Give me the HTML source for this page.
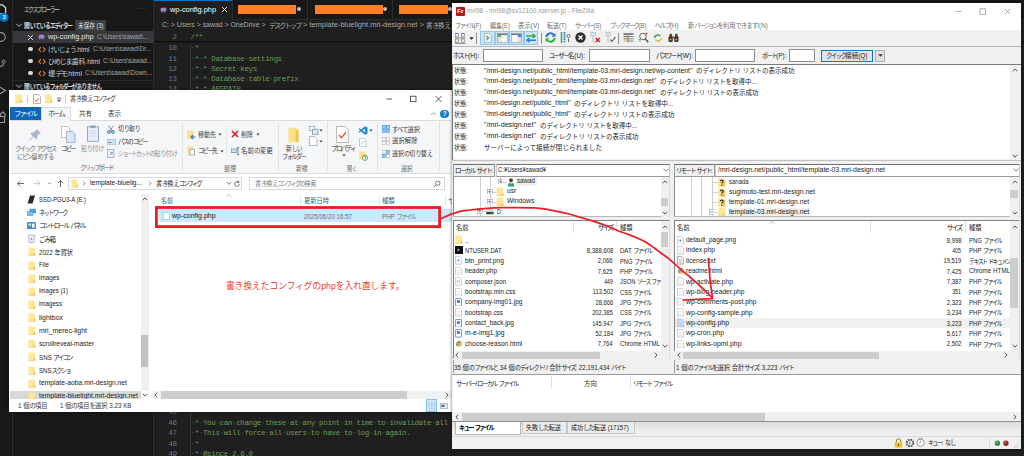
<!DOCTYPE html>
<html lang="ja">
<head>
<meta charset="utf-8">
<title>wp-config upload</title>
<style>
*{box-sizing:border-box;margin:0;padding:0}
html,body{width:1024px;height:456px;overflow:hidden;background:#1f1f1f}
body{position:relative;font-family:"Liberation Sans","Noto Sans CJK JP",sans-serif;font-size:6.6px;color:#222}
.a{position:absolute}
.t{position:absolute;white-space:nowrap;line-height:1}
.k{letter-spacing:-.25em}
.h{letter-spacing:-.13em}
.w{color:#4d5f45}
.code{font-family:"Liberation Mono","Noto Sans CJK JP",monospace;letter-spacing:-.36px;color:#6a9955}
.ln{font-family:"Liberation Mono","Noto Sans CJK JP",monospace;letter-spacing:-.36px;color:#6e7681}
</style>
</head>
<body>
<div class="a" style="left:0px;top:0px;width:1024px;height:456px;background:#1f1f1f;"></div>
<div class="a" style="left:0px;top:0px;width:13px;height:456px;background:#181818;border-right:1px solid #2b2b2b;"></div>
<div class="a" style="left:13px;top:0px;width:140.5px;height:456px;background:#181818;border-right:1px solid #2b2b2b;"></div>
<div class="a" style="left:153.5px;top:0px;width:871px;height:20px;background:#181818;border-bottom:1px solid #2b2b2b;"></div>
<div class="a" style="left:153.5px;top:0px;width:79px;height:20px;background:#1f1f1f;border-top:1px solid #0078d4;border-right:1px solid #2b2b2b;"></div>
<svg class="a" style="left:0;top:0" width="13" height="140" viewBox="0 0 13 140">
<path d="M-2 4.800h4.600l3 3v6h-7.600z" fill="none" stroke="#e0e0e0" stroke-width="1.200"/>
<circle cx="4" cy="17.300" r="4.500" fill="#0078d4"/>
<circle cx="0.800" cy="37" r="4.400" fill="none" stroke="#9a9a9a" stroke-width="1.100"/>
<path d="M-1 66.500c3 0 4.500-1 4.500-3.300" fill="none" stroke="#9a9a9a" stroke-width="1.100"/><circle cx="3.600" cy="61.600" r="1.500" fill="none" stroke="#9a9a9a" stroke-width="1"/>
<path d="M-1 86.500l6.500 4-6.500 4" fill="none" stroke="#9a9a9a" stroke-width="1.100"/>
<path d="M-1 116.500h5.500v6h-7M0.500 116.500v-2.500l2.300-2 2.300 2v2.500" fill="none" stroke="#9a9a9a" stroke-width="1.100"/>
</svg>
<div class="t" style="top:15.00px;font-size:5.2px;color:#fff;font-weight:bold;left:2.70px;">3</div>
<div class="t" style="top:6.00px;font-size:7.2px;color:#ccc;left:24.00px;transform:scaleX(0.804);transform-origin:left center;"><span class="k">エクスプローラー</span></div>
<div class="t" style="top:5.00px;font-size:8px;color:#ccc;left:137.50px;transform:scaleX(0.936);transform-origin:left center;"><span class="w">·</span><span class="w">·</span><span class="w">·</span></div>
<svg class="a" style="left:15px;top:21.2px" width="8" height="8" viewBox="0 0 8 8"><path d="M1.300 2.800l2.700 2.700 2.700-2.700" fill="none" stroke="#ccc" stroke-width=".9"/></svg>
<div class="t" style="top:22.00px;font-size:7.2px;color:#d4d4d4;font-weight:bold;left:24.00px;transform:scaleX(0.813);transform-origin:left center;">開<span class="h">いている</span><span class="k">エディター</span></div>
<div class="a" style="left:74.5px;top:20px;width:31px;height:10.5px;background:#3e3e3e;border-radius:1px;"></div>
<div class="t" style="top:22.00px;font-size:7.2px;color:#e0e0e0;left:77.50px;transform:scaleX(0.788);transform-origin:left center;">未保存 (3)</div>
<div class="a" style="left:13px;top:31px;width:140.5px;height:12px;background:#37373d;"></div>
<svg class="a" style="left:27px;top:33.7px" width="7" height="7" viewBox="0 0 7 7"><path d="M1 1l5 5M6 1l-5 5" stroke="#ddd" stroke-width=".95"/></svg>
<svg class="a" style="left:38px;top:34.4px" width="7" height="6.100" viewBox="0 0 8 7"><ellipse cx="4" cy="2.800" rx="3.500" ry="2.300" fill="#a57ccf"/><rect x="1.300" y="3.500" width="1.400" height="2.700" fill="#a57ccf"/><rect x="4.700" y="3.500" width="1.400" height="2.700" fill="#a57ccf"/></svg>
<div class="t" style="top:33.00px;font-size:7.2px;color:#e6e6e6;left:48.00px;transform:scaleX(1.017);transform-origin:left center;">wp-config.php</div>
<div class="t" style="top:34.00px;font-size:6.4px;color:#a6a6a6;left:97.00px;transform:scaleX(0.986);transform-origin:left center;">C:\Users\sawad\...</div>
<div class="a" style="left:28.300px;top:47.1px;width:4.400px;height:4.400px;border-radius:50%;background:#d8d8d8"></div>
<svg class="a" style="left:37.500px;top:45.8px" width="8" height="7" viewBox="0 0 8 7"><path d="M3 1.200l-2.200 2.300 2.200 2.300M5 1.200l2.200 2.300-2.200 2.300" fill="none" stroke="#e37933" stroke-width="1.100"/></svg>
<div class="t" style="top:46.00px;font-size:7.2px;color:#d0d0d0;left:48.00px;transform:scaleX(0.886);transform-origin:left center;"><span class="h">けいじょう</span>.html</div>
<div class="t" style="top:46.00px;font-size:6.4px;color:#a6a6a6;left:92.50px;transform:scaleX(0.990);transform-origin:left center;">C:\Users\sawad\Dr...</div>
<div class="a" style="left:28.300px;top:59.1px;width:4.400px;height:4.400px;border-radius:50%;background:#d8d8d8"></div>
<svg class="a" style="left:37.500px;top:57.8px" width="8" height="7" viewBox="0 0 8 7"><path d="M3 1.200l-2.200 2.300 2.200 2.300M5 1.200l2.200 2.300-2.200 2.300" fill="none" stroke="#e37933" stroke-width="1.100"/></svg>
<div class="t" style="top:58.00px;font-size:7.2px;color:#d0d0d0;left:48.00px;transform:scaleX(0.946);transform-origin:left center;"><span class="h">ひめじま</span>歯科.html</div>
<div class="t" style="top:58.00px;font-size:6.4px;color:#a6a6a6;left:103.00px;transform:scaleX(0.971);transform-origin:left center;">C:\Users\sawad...</div>
<div class="a" style="left:28.300px;top:71.1px;width:4.400px;height:4.400px;border-radius:50%;background:#d8d8d8"></div>
<svg class="a" style="left:37.500px;top:69.8px" width="8" height="7" viewBox="0 0 8 7"><path d="M3 1.200l-2.200 2.300 2.200 2.300M5 1.200l2.200 2.300-2.200 2.300" fill="none" stroke="#e37933" stroke-width="1.100"/></svg>
<div class="t" style="top:70.00px;font-size:7.2px;color:#d0d0d0;left:48.00px;transform:scaleX(1.013);transform-origin:left center;">堤<span class="k">デモ</span>.html</div>
<div class="t" style="top:70.00px;font-size:6.4px;color:#a6a6a6;left:85.00px;transform:scaleX(0.977);transform-origin:left center;">C:\Users\sawad\Down...</div>
<div class="a" style="left:13px;top:79.5px;width:140.5px;height:1px;background:#2b2b2b;"></div>
<svg class="a" style="left:15px;top:82.2px" width="8" height="8" viewBox="0 0 8 8"><path d="M1.300 2.800l2.700 2.700 2.700-2.700" fill="none" stroke="#ccc" stroke-width=".9"/></svg>
<div class="t" style="top:83.00px;font-size:7.2px;color:#d4d4d4;font-weight:bold;left:24.00px;transform:scaleX(0.805);transform-origin:left center;">開<span class="h">いている</span><span class="k">フォルダー</span><span class="h">がありません</span></div>
<svg class="a" style="left:160.3px;top:6.7px" width="7" height="6.100" viewBox="0 0 8 7"><ellipse cx="4" cy="2.800" rx="3.500" ry="2.300" fill="#a57ccf"/><rect x="1.300" y="3.500" width="1.400" height="2.700" fill="#a57ccf"/><rect x="4.700" y="3.500" width="1.400" height="2.700" fill="#a57ccf"/></svg>
<div class="t" style="top:6.00px;font-size:7.2px;color:#fff;left:170.00px;transform:scaleX(1.028);transform-origin:left center;">wp-config.php</div>
<svg class="a" style="left:220.8px;top:6.2px" width="7" height="7" viewBox="0 0 7 7"><path d="M1 1l5 5M6 1l-5 5" stroke="#eee" stroke-width=".95"/></svg>
<div class="a" style="left:238px;top:4.7px;width:58px;height:9.2px;background:#ff7f27;"></div>
<div class="a" style="left:297.2px;top:7.200px;width:4.200px;height:4.200px;border-radius:50%;background:#bdbdbd"></div>
<div class="a" style="left:315px;top:4.7px;width:67.5px;height:9.2px;background:#ff7f27;"></div>
<div class="a" style="left:383px;top:7.200px;width:4.200px;height:4.200px;border-radius:50%;background:#bdbdbd"></div>
<div class="a" style="left:399px;top:4.7px;width:48.5px;height:9.2px;background:#ff7f27;"></div>
<div class="a" style="left:448.3px;top:7.200px;width:4.200px;height:4.200px;border-radius:50%;background:#bdbdbd"></div>
<div class="a" style="left:306.5px;top:0px;width:1px;height:20px;background:#2b2b2b;"></div>
<div class="a" style="left:392px;top:0px;width:1px;height:20px;background:#2b2b2b;"></div>
<div class="t" style="top:21.00px;font-size:7.2px;color:#a9a9a9;left:162.00px;transform:scaleX(0.960);transform-origin:left center;">C: &gt; Users &gt; sawad &gt; OneDrive &gt;</div>
<div class="t" style="top:22.00px;font-size:7.2px;color:#a9a9a9;left:269.00px;transform:scaleX(0.974);transform-origin:left center;"><span class="k">デスクトップ</span></div>
<div class="t" style="top:21.00px;font-size:7.2px;color:#a9a9a9;left:302.80px;transform:scaleX(1.035);transform-origin:left center;">&gt; template-bluelight.mri-design.net &gt;</div>
<div class="t" style="top:22.00px;font-size:7.2px;color:#a9a9a9;left:426.00px;transform:scaleX(0.897);transform-origin:left center;">書<span class="h">き</span>換<span class="h">え</span><span class="k">コンフィグ</span></div>
<div class="t ln" style="top:34.00px;font-size:7.5px;right:847.40px;">2</div>
<div class="t code" style="top:34.00px;font-size:7.5px;left:190.50px;">/**</div>
<div class="a" style="left:154px;top:41.2px;width:870px;height:2.2px;background:linear-gradient(rgba(0,0,0,.75),rgba(0,0,0,0));"></div>
<div class="a" style="left:190.3px;top:43.5px;width:0.7px;height:47px;background:#373737;"></div>
<div class="a" style="left:190.3px;top:412px;width:0.7px;height:44px;background:#373737;"></div>
<div class="t ln" style="top:45.00px;font-size:7.5px;right:847.40px;">10</div>
<div class="t code" style="top:45.00px;font-size:7.5px;left:190.50px;"><span class="w">·</span>*</div>
<div class="t ln" style="top:56.00px;font-size:7.5px;right:847.40px;">11</div>
<div class="t code" style="top:56.00px;font-size:7.5px;left:190.50px;"><span class="w">·</span>*<span class="w">·</span>*<span class="w">·</span>Database<span class="w">·</span>settings</div>
<div class="t ln" style="top:66.00px;font-size:7.5px;right:847.40px;">12</div>
<div class="t code" style="top:66.00px;font-size:7.5px;left:190.50px;"><span class="w">·</span>*<span class="w">·</span>*<span class="w">·</span>Secret<span class="w">·</span>keys</div>
<div class="t ln" style="top:76.00px;font-size:7.5px;right:847.40px;">13</div>
<div class="t code" style="top:76.00px;font-size:7.5px;left:190.50px;"><span class="w">·</span>*<span class="w">·</span>*<span class="w">·</span>Database<span class="w">·</span>table<span class="w">·</span>prefix</div>
<div class="t ln" style="top:86.00px;font-size:7.5px;right:847.40px;">14</div>
<div class="t code" style="top:86.00px;font-size:7.5px;left:190.50px;"><span class="w">·</span>*<span class="w">·</span>*<span class="w">·</span>ABSPATH</div>
<div class="t ln" style="top:409.00px;font-size:7.5px;right:847.40px;">45</div>
<div class="t code" style="top:409.00px;font-size:7.5px;left:190.50px;"><span class="w">·</span>*</div>
<div class="t ln" style="top:420.00px;font-size:7.5px;right:847.40px;">46</div>
<div class="t code" style="top:420.00px;font-size:7.5px;left:190.50px;"><span class="w">·</span>*<span class="w">·</span>You<span class="w">·</span>can<span class="w">·</span>change<span class="w">·</span>these<span class="w">·</span>at<span class="w">·</span>any<span class="w">·</span>point<span class="w">·</span>in<span class="w">·</span>time<span class="w">·</span>to<span class="w">·</span>invalidate<span class="w">·</span>all<span class="w">·</span>existing<span class="w">·</span>cookies.</div>
<div class="t ln" style="top:430.00px;font-size:7.5px;right:847.40px;">47</div>
<div class="t code" style="top:430.00px;font-size:7.5px;left:190.50px;"><span class="w">·</span>*<span class="w">·</span>This<span class="w">·</span>will<span class="w">·</span>force<span class="w">·</span>all<span class="w">·</span>users<span class="w">·</span>to<span class="w">·</span>have<span class="w">·</span>to<span class="w">·</span>log<span class="w">·</span>in<span class="w">·</span>again.</div>
<div class="t ln" style="top:441.00px;font-size:7.5px;right:847.40px;">48</div>
<div class="t code" style="top:441.00px;font-size:7.5px;left:190.50px;"><span class="w">·</span>*</div>
<div class="t ln" style="top:451.00px;font-size:7.5px;right:847.40px;">49</div>
<div class="t code" style="top:451.00px;font-size:7.5px;left:190.50px;"><span class="w">·</span>*<span class="w">·</span>@since<span class="w">·</span>2.6.0</div>
<div class="a" style="left:9px;top:90px;width:443px;height:322px;background:#fff;box-shadow:0 0 3px rgba(0,0,0,.5);"></div>
<svg class="a" style="left:15px;top:94px" width="7.5" height="9.5" viewBox="0 0 8 10"><path d="M0.300 0.500h6l1.200 1v8h-7.200z" fill="#ffe596"/><path d="M5.800 6.500h1.900v3h-1.900z" fill="#eec456"/><path d="M0.300 8.700h7.400v.8h-7.400z" fill="#f3d372"/></svg>
<div class="a" style="left:26.5px;top:95px;width:0.8px;height:8px;background:#c8c8c8;"></div>
<svg class="a" style="left:32.500px;top:94px" width="8" height="10" viewBox="0 0 8 10"><path d="M.5.5h5l2 2v7h-7z" fill="#fff" stroke="#9a9a9a" stroke-width=".7"/><path d="M1.800 5.800l1.500 1.600 2.700-3.200" fill="none" stroke="#e8562a" stroke-width="1"/></svg>
<svg class="a" style="left:45px;top:94px" width="7.5" height="9.5" viewBox="0 0 8 10"><path d="M0.300 0.500h6l1.200 1v8h-7.200z" fill="#ffe596"/><path d="M5.800 6.500h1.900v3h-1.900z" fill="#eec456"/><path d="M0.300 8.700h7.400v.8h-7.400z" fill="#f3d372"/></svg>
<svg class="a" style="left:56px;top:96.500px" width="6" height="6" viewBox="0 0 6 6"><path d="M1 1.200h4" stroke="#444" stroke-width=".8"/><path d="M1 2.800h4l-2 2.200z" fill="#444"/></svg>
<div class="a" style="left:65px;top:95px;width:0.8px;height:8px;background:#c8c8c8;"></div>
<div class="t" style="top:96.00px;font-size:6.6px;color:#2a2a2a;left:69.50px;transform:scaleX(0.907);transform-origin:left center;">書<span class="h">き</span>換<span class="h">え</span><span class="k">コンフィグ</span></div>
<svg class="a" style="left:384px;top:93px" width="60" height="12" viewBox="0 0 60 12"><path d="M2.500 6h5.500" stroke="#333" stroke-width=".8"/><rect x="26.500" y="3.200" width="5.500" height="5.500" fill="none" stroke="#333" stroke-width=".8"/><path d="M51.500 3l6 6M57.500 3l-6 6" stroke="#333" stroke-width=".8"/></svg>
<div class="a" style="left:10px;top:107px;width:30.5px;height:13px;background:#1264b6;"></div>
<div class="t" style="top:111.00px;font-size:6.6px;color:#fff;left:14.00px;transform:scaleX(1.112);transform-origin:left center;"><span class="k">ファイル</span></div>
<div class="a" style="left:41px;top:107px;width:29.8px;height:13.5px;background:#f5f6f7;border:1px solid #dadbdc;border-bottom:none;"></div>
<div class="t" style="top:111.00px;font-size:6.6px;color:#3b3b3b;left:47.50px;transform:scaleX(1.093);transform-origin:left center;"><span class="k">ホーム</span></div>
<div class="t" style="top:111.00px;font-size:6.6px;color:#3b3b3b;left:79.00px;transform:scaleX(0.986);transform-origin:left center;">共有</div>
<div class="t" style="top:111.00px;font-size:6.6px;color:#3b3b3b;left:108.00px;transform:scaleX(0.986);transform-origin:left center;">表示</div>
<svg class="a" style="left:430px;top:111px" width="7" height="6" viewBox="0 0 7 6"><path d="M1 4l2.500-2.500 2.500 2.500" fill="none" stroke="#888" stroke-width=".8"/></svg>
<div class="a" style="left:440.300px;top:109.800px;width:8.400px;height:8.400px;border-radius:50%;background:#1979ca"></div>
<div class="t" style="top:111.00px;font-size:6.4px;color:#fff;font-weight:bold;left:442.70px;">?</div>
<div class="a" style="left:10px;top:120px;width:441px;height:53.5px;background:#f5f6f7;border-top:1px solid #dadbdc;border-bottom:1px solid #dadbdc;"></div>
<div class="a" style="left:41.8px;top:119.5px;width:28.2px;height:2px;background:#f5f6f7;"></div>
<svg class="a" style="left:28px;top:127.500px" width="14" height="13" viewBox="0 0 14 13"><path d="M8.500.8l4.400 4.400-1.400.5-2.300 2.300.2 2.700-1.300.6-2.500-2.500-4 4-.6-.6 4-4-2.500-2.500.6-1.300 2.700.2 2.300-2.300z" fill="#a9b8cf"/></svg>
<div class="t" style="top:146.00px;font-size:6.6px;color:#6f6f6f;left:14.50px;transform:scaleX(0.986);transform-origin:left center;"><span class="k">クイック</span> <span class="k">アクセス</span></div>
<div class="t" style="top:154.00px;font-size:6.6px;color:#6f6f6f;left:16.50px;transform:scaleX(0.925);transform-origin:left center;"><span class="h">に</span><span class="k">ピン</span>留<span class="h">めする</span></div>
<svg class="a" style="left:61px;top:125.500px" width="15" height="17" viewBox="0 0 15 17"><path d="M.5.5h6l2.500 2.500v8.500h-8.500z" fill="#fff" stroke="#a8a8a8" stroke-width=".7"/><path d="M5.500 5.500h6l2.500 2.500v8.500h-8.500z" fill="#d6e8fa" stroke="#8e9db0" stroke-width=".7"/></svg>
<div class="t" style="top:146.00px;font-size:6.6px;color:#3b3b3b;left:61.00px;transform:scaleX(0.943);transform-origin:left center;"><span class="k">コピー</span></div>
<svg class="a" style="left:86.500px;top:125px" width="12" height="17" viewBox="0 0 12 17"><rect x=".5" y="1.800" width="11" height="14.500" fill="#e6eefa" stroke="#7f95b5" stroke-width=".8"/><rect x="3.500" y=".4" width="5" height="2.600" fill="#8ea3c0"/><path d="M2.500 6h7M2.500 8.500h7M2.500 11h7" stroke="#c3d0e4" stroke-width=".6"/></svg>
<div class="t" style="top:146.00px;font-size:6.6px;color:#8d8d8d;left:81.00px;transform:scaleX(0.911);transform-origin:left center;">貼<span class="h">り</span>付<span class="h">け</span></div>
<svg class="a" style="left:107px;top:124.500px" width="8" height="9" viewBox="0 0 8 9"><path d="M1.500.5l4 6M6.500.5l-4 6" stroke="#777" stroke-width=".8"/><circle cx="2" cy="7" r="1.400" fill="none" stroke="#2a6fc0" stroke-width=".9"/><circle cx="6" cy="7" r="1.400" fill="none" stroke="#2a6fc0" stroke-width=".9"/></svg>
<div class="t" style="top:126.00px;font-size:6.6px;color:#3b3b3b;left:117.50px;transform:scaleX(0.891);transform-origin:left center;">切<span class="h">り</span>取<span class="h">り</span></div>
<svg class="a" style="left:106.500px;top:138.500px" width="9" height="6" viewBox="0 0 9 6"><rect x=".3" y=".3" width="8.400" height="5" fill="#cfe3f7" stroke="#8fb2d8" stroke-width=".6"/><path d="M1.500 3.500h3" stroke="#3b6ea5" stroke-width=".8"/></svg>
<div class="t" style="top:139.00px;font-size:6.6px;color:#3b3b3b;left:117.50px;transform:scaleX(0.951);transform-origin:left center;"><span class="k">パス</span><span class="h">の</span><span class="k">コピー</span></div>
<svg class="a" style="left:107px;top:148.500px" width="8" height="9" viewBox="0 0 8 9"><rect x=".5" y=".5" width="6.500" height="8" fill="#eef3fa" stroke="#8ea3c0" stroke-width=".8"/><path d="M2.500 6l2.500-2.500M3.300 3.300h1.900v1.900" fill="none" stroke="#5d7fa8" stroke-width=".8"/></svg>
<div class="t" style="top:151.00px;font-size:6.6px;color:#8d8d8d;left:117.50px;transform:scaleX(0.907);transform-origin:left center;"><span class="k">ショートカット</span><span class="h">の</span>貼<span class="h">り</span>付<span class="h">け</span></div>
<div class="t" style="top:165.00px;font-size:6.6px;color:#666;left:79.50px;transform:scaleX(0.953);transform-origin:left center;"><span class="k">クリップボード</span></div>
<div class="a" style="left:182px;top:122px;width:1px;height:49px;background:#e2e3e4;"></div>
<svg class="a" style="left:187px;top:129.500px" width="9" height="10" viewBox="0 0 9 10"><path d="M.3.500h5l1.800 1.300v7.500h-6.800z" fill="#ffe08a"/><path d="M8.500 7h-4M6 5l-2 2 2 2" fill="none" stroke="#2a7bd0" stroke-width="1.100"/></svg>
<div class="t" style="top:132.00px;font-size:6.6px;color:#3b3b3b;left:197.50px;transform:scaleX(0.910);transform-origin:left center;">移動先</div>
<svg class="a" style="left:217.5px;top:133px" width="4" height="3" viewBox="0 0 4 3"><path d="M.3.500h3.400l-1.700 2z" fill="#444"/></svg>
<svg class="a" style="left:187px;top:145.500px" width="9" height="10" viewBox="0 0 9 10"><path d="M.3.500h5l1.800 1.300v7.500h-6.800z" fill="#ffe08a"/><rect x="3" y="3.500" width="4.500" height="5.500" fill="#fff" stroke="#7f95b5" stroke-width=".7"/></svg>
<div class="t" style="top:148.00px;font-size:6.6px;color:#3b3b3b;left:197.50px;transform:scaleX(0.933);transform-origin:left center;"><span class="k">コピー</span>先</div>
<svg class="a" style="left:219.5px;top:149.5px" width="4" height="3" viewBox="0 0 4 3"><path d="M.3.500h3.400l-1.700 2z" fill="#444"/></svg>
<div class="a" style="left:226px;top:126px;width:1px;height:30px;background:#e2e3e4;"></div>
<svg class="a" style="left:231px;top:130px" width="8" height="8" viewBox="0 0 8 8"><path d="M1 1l6 6M7 1l-6 6" stroke="#e02020" stroke-width="1.700"/></svg>
<div class="t" style="top:132.00px;font-size:6.6px;color:#3b3b3b;left:240.80px;transform:scaleX(0.925);transform-origin:left center;">削除</div>
<svg class="a" style="left:255.5px;top:133px" width="4" height="3" viewBox="0 0 4 3"><path d="M.3.500h3.400l-1.700 2z" fill="#444"/></svg>
<svg class="a" style="left:230.500px;top:146.500px" width="9" height="8" viewBox="0 0 9 8"><rect x=".3" y="2" width="5.500" height="3.500" fill="#cfe3f7" stroke="#5e8fc6" stroke-width=".7"/><path d="M7 .5v7M5.800.5h2.400M5.800 7.500h2.400" stroke="#555" stroke-width=".7"/></svg>
<div class="t" style="top:148.00px;font-size:6.6px;color:#3b3b3b;left:240.80px;transform:scaleX(0.987);transform-origin:left center;">名前<span class="h">の</span>変更</div>
<div class="t" style="top:166.00px;font-size:6.6px;color:#666;left:224.00px;transform:scaleX(0.910);transform-origin:left center;">整理</div>
<div class="a" style="left:277.5px;top:122px;width:1px;height:49px;background:#e2e3e4;"></div>
<svg class="a" style="left:288px;top:126.500px" width="11" height="16" viewBox="0 0 11 16"><path d="M.5.800h7l2.800 2v12.400h-9.800z" fill="#ffe08a"/><path d="M7.500 3.300h3v12h-3z" fill="#f3c54a"/></svg>
<div class="t" style="top:146.00px;font-size:6.6px;color:#3b3b3b;left:286.00px;transform:scaleX(0.874);transform-origin:left center;">新<span class="h">しい</span></div>
<div class="t" style="top:154.00px;font-size:6.6px;color:#3b3b3b;left:281.80px;transform:scaleX(0.939);transform-origin:left center;"><span class="k">フォルダー</span></div>
<svg class="a" style="left:308.500px;top:125.500px" width="10" height="9" viewBox="0 0 10 9"><rect x=".5" y=".5" width="5" height="4" fill="#fff" stroke="#8a99ad" stroke-width=".7"/><rect x="3.500" y="3.300" width="5.500" height="5" fill="#dce9f8" stroke="#6e8bb0" stroke-width=".7"/></svg>
<svg class="a" style="left:319px;top:129px" width="4" height="3" viewBox="0 0 4 3"><path d="M.3.500h3.400l-1.700 2z" fill="#444"/></svg>
<svg class="a" style="left:309px;top:136px" width="9" height="10" viewBox="0 0 9 10"><path d="M.5.500h5l2.500 2.500v6.500h-7.500z" fill="#fff" stroke="#8a99ad" stroke-width=".7"/></svg>
<svg class="a" style="left:319px;top:140px" width="4" height="3" viewBox="0 0 4 3"><path d="M.3.500h3.400l-1.700 2z" fill="#444"/></svg>
<div class="t" style="top:166.00px;font-size:6.6px;color:#666;left:295.50px;transform:scaleX(0.872);transform-origin:left center;">新規</div>
<div class="a" style="left:326.8px;top:122px;width:1px;height:49px;background:#e2e3e4;"></div>
<svg class="a" style="left:336px;top:125.500px" width="13" height="17" viewBox="0 0 13 17"><path d="M.5.500h8.500l3.300 3.300v12.700h-11.800z" fill="#fff" stroke="#9c9c9c" stroke-width=".7"/><path d="M3 9l2.500 2.700 4.500-5.500" fill="none" stroke="#e8562a" stroke-width="1.400"/></svg>
<div class="t" style="top:146.00px;font-size:6.6px;color:#3b3b3b;left:331.00px;transform:scaleX(0.987);transform-origin:left center;"><span class="k">プロパティ</span></div>
<svg class="a" style="left:341.5px;top:154px" width="4" height="3" viewBox="0 0 4 3"><path d="M.3.500h3.400l-1.700 2z" fill="#444"/></svg>
<svg class="a" style="left:357.500px;top:125.500px" width="10" height="9" viewBox="0 0 10 9"><path d="M7 .3l2.500 1.200v6l-2.500 1.200-5-4.200zM7 2.800l-2.500 1.700 2.500 1.700z" fill="#1f8ad2"/><path d="M.5 3l1 -.8 2.500 2.300-2.500 2.300-1-.8 1.800-1.500z" fill="#1f8ad2"/></svg>
<svg class="a" style="left:368.5px;top:129px" width="4" height="3" viewBox="0 0 4 3"><path d="M.3.500h3.400l-1.700 2z" fill="#444"/></svg>
<svg class="a" style="left:359px;top:137.500px" width="8" height="9" viewBox="0 0 8 9"><path d="M.5.500h4.500l2 2v6h-6.500z" fill="#fff" stroke="#a9b6c8" stroke-width=".7"/><path d="M2 6.500l3.500-3.500" stroke="#9cb2d0" stroke-width="1"/></svg>
<svg class="a" style="left:358.500px;top:150.500px" width="9" height="10" viewBox="0 0 9 10"><path d="M.3.500h4.500l1.800 1.300v6.500h-6.300z" fill="#ffe08a"/><circle cx="6" cy="6.800" r="2.600" fill="#e9f3e4" stroke="#4d8a3c" stroke-width=".8"/><path d="M6 5.300v1.600h1.200" fill="none" stroke="#333" stroke-width=".6"/></svg>
<div class="t" style="top:166.00px;font-size:6.6px;color:#666;left:347.00px;transform:scaleX(0.770);transform-origin:left center;">開<span class="h">く</span></div>
<div class="a" style="left:377px;top:122px;width:1px;height:49px;background:#e2e3e4;"></div>
<svg class="a" style="left:381.500px;top:125px" width="8" height="8" viewBox="0 0 8 8"><rect x=".4" y=".4" width="3.100" height="3.100" fill="#9fcdf5" stroke="#3f8ed8" stroke-width=".6"/><rect x="4.500" y=".4" width="3.100" height="3.100" fill="#9fcdf5" stroke="#3f8ed8" stroke-width=".6"/><rect x=".4" y="4.500" width="3.100" height="3.100" fill="#9fcdf5" stroke="#3f8ed8" stroke-width=".6"/><rect x="4.500" y="4.500" width="3.100" height="3.100" fill="#9fcdf5" stroke="#3f8ed8" stroke-width=".6"/></svg>
<div class="t" style="top:127.00px;font-size:6.6px;color:#3b3b3b;left:392.00px;transform:scaleX(0.944);transform-origin:left center;"><span class="h">すべて</span>選択</div>
<svg class="a" style="left:381.500px;top:136.5px" width="8" height="8" viewBox="0 0 8 8"><rect x=".4" y=".4" width="3.100" height="3.100" fill="#fff" stroke="#b5b5b5" stroke-width=".6"/><rect x="4.500" y=".4" width="3.100" height="3.100" fill="#fff" stroke="#b5b5b5" stroke-width=".6"/><rect x=".4" y="4.500" width="3.100" height="3.100" fill="#fff" stroke="#b5b5b5" stroke-width=".6"/><rect x="4.500" y="4.500" width="3.100" height="3.100" fill="#fff" stroke="#b5b5b5" stroke-width=".6"/></svg>
<div class="t" style="top:138.00px;font-size:6.6px;color:#3b3b3b;left:392.00px;transform:scaleX(0.967);transform-origin:left center;">選択解除</div>
<svg class="a" style="left:381.500px;top:149.5px" width="8" height="8" viewBox="0 0 8 8"><rect x=".4" y=".4" width="3.100" height="3.100" fill="#fff" stroke="#b5b5b5" stroke-width=".6"/><rect x="4.500" y=".4" width="3.100" height="3.100" fill="#9fcdf5" stroke="#3f8ed8" stroke-width=".6"/><rect x=".4" y="4.500" width="3.100" height="3.100" fill="#9fcdf5" stroke="#3f8ed8" stroke-width=".6"/><rect x="4.500" y="4.500" width="3.100" height="3.100" fill="#fff" stroke="#b5b5b5" stroke-width=".6"/></svg>
<div class="t" style="top:151.00px;font-size:6.6px;color:#3b3b3b;left:392.00px;transform:scaleX(0.917);transform-origin:left center;">選択<span class="h">の</span>切<span class="h">り</span>替<span class="h">え</span></div>
<div class="t" style="top:166.00px;font-size:6.6px;color:#666;left:401.00px;transform:scaleX(0.872);transform-origin:left center;">選択</div>
<div class="a" style="left:438.5px;top:122px;width:1px;height:49px;background:#e2e3e4;"></div>
<svg class="a" style="left:15px;top:179px" width="52" height="9" viewBox="0 0 52 9"><path d="M9 4.500h-6.500M5.300 1.800l-2.800 2.700 2.800 2.700" fill="none" stroke="#555" stroke-width=".9"/><path d="M18.500 4.500h6.500M22.200 1.800l2.800 2.700-2.800 2.700" fill="none" stroke="#c4c4c4" stroke-width=".9"/><path d="M33 3.500l1.600 1.600 1.600-1.600" fill="none" stroke="#777" stroke-width=".8"/><path d="M45.500 8v-6.500M42.800 4.200l2.700-2.700 2.700 2.700" fill="none" stroke="#555" stroke-width=".9"/></svg>
<div class="a" style="left:67.5px;top:177px;width:165px;height:12.8px;background:#fff;border:1px solid #d9d9d9;"></div>
<div class="a" style="left:232px;top:177px;width:9.5px;height:12.8px;background:#fff;border:1px solid #d9d9d9;border-left:none;"></div>
<svg class="a" style="left:70.5px;top:178.8px" width="7" height="8.8" viewBox="0 0 8 10"><path d="M0.300 0.500h6l1.200 1v8h-7.200z" fill="#ffe596"/><path d="M5.800 6.500h1.900v3h-1.900z" fill="#eec456"/><path d="M0.300 8.700h7.400v.8h-7.400z" fill="#f3d372"/></svg>
<svg class="a" style="left:81.5px;top:181px" width="4" height="5" viewBox="0 0 4 5"><path d="M1 .6l1.900 1.900-1.900 1.900" fill="none" stroke="#555" stroke-width=".7"/></svg>
<div class="t" style="top:180.00px;font-size:6.6px;color:#222;left:90.00px;transform:scaleX(0.999);transform-origin:left center;">template-bluelig...</div>
<svg class="a" style="left:147.5px;top:181px" width="4" height="5" viewBox="0 0 4 5"><path d="M1 .6l1.900 1.900-1.900 1.900" fill="none" stroke="#555" stroke-width=".7"/></svg>
<div class="t" style="top:181.00px;font-size:6.6px;color:#222;left:155.50px;transform:scaleX(0.917);transform-origin:left center;">書<span class="h">き</span>換<span class="h">え</span><span class="k">コンフィグ</span></div>
<svg class="a" style="left:225.500px;top:181px" width="6" height="5" viewBox="0 0 6 5"><path d="M.8 1l2.200 2.300 2.200-2.300" fill="none" stroke="#555" stroke-width=".8"/></svg>
<svg class="a" style="left:233px;top:179.500px" width="8" height="8" viewBox="0 0 8 8"><path d="M6.300 4a2.400 2.400 0 1 1-.8-1.800" fill="none" stroke="#555" stroke-width=".8"/><path d="M5.800.5v2h-2" fill="none" stroke="#555" stroke-width=".8"/></svg>
<div class="a" style="left:248.5px;top:177px;width:196.5px;height:12.8px;background:#fff;border:1px solid #d9d9d9;"></div>
<div class="t" style="top:181.00px;font-size:6.6px;color:#767676;left:254.50px;transform:scaleX(0.904);transform-origin:left center;">書<span class="h">き</span>換<span class="h">え</span><span class="k">コンフィグ</span><span class="h">の</span>検索</div>
<svg class="a" style="left:433px;top:179.500px" width="8" height="8" viewBox="0 0 8 8"><circle cx="4.800" cy="3.200" r="2.200" fill="none" stroke="#555" stroke-width=".8"/><path d="M3.200 4.800l-2.400 2.400" stroke="#555" stroke-width=".9"/></svg>
<div class="a" style="left:10px;top:390.5px;width:130.5px;height:8.5px;background:#d9d9d9;"></div>
<svg class="a" style="left:27px;top:195.1px" width="9" height="9" viewBox="0 0 9 9"><path d="M3 .5h5l-2.500 8h-5z" fill="#2b2b2b"/></svg>
<div class="t" style="top:197.00px;font-size:6.6px;color:#222;left:39.00px;transform:scaleX(0.897);transform-origin:left center;">SSD-PGU3-A (E:)</div>
<svg class="a" style="left:26.500px;top:208.23px" width="10" height="9" viewBox="0 0 10 9"><rect x="2.500" y=".8" width="6.500" height="4.500" fill="#4a9ee8"/><rect x=".5" y="3.500" width="5.500" height="4" fill="#7cc0f5" stroke="#3d86c9" stroke-width=".5"/></svg>
<div class="t" style="top:210.00px;font-size:6.6px;color:#222;left:39.00px;transform:scaleX(0.944);transform-origin:left center;"><span class="k">ネットワーク</span></div>
<svg class="a" style="left:27px;top:221.86px" width="9" height="8" viewBox="0 0 9 8"><rect x=".4" y=".4" width="8.200" height="6.400" fill="#3c8fdd" stroke="#2a6db0" stroke-width=".5"/><rect x="1.500" y="1.600" width="2.600" height="2" fill="#d8f0c0"/><rect x="5" y="1.600" width="2.400" height="4" fill="#fff"/></svg>
<div class="t" style="top:223.00px;font-size:6.6px;color:#222;left:39.00px;transform:scaleX(0.992);transform-origin:left center;"><span class="k">コントロール</span> <span class="k">パネル</span></div>
<svg class="a" style="left:28px;top:234.49px" width="7" height="9" viewBox="0 0 7 9"><path d="M.5 1h6l-.6 7.500h-4.800z" fill="#e8eef5" stroke="#8b9bb0" stroke-width=".6"/><path d="M2.500 5.500l1-1.700 1 1.700z" fill="#2a7bd0"/></svg>
<div class="t" style="top:237.00px;font-size:6.6px;color:#222;left:39.00px;transform:scaleX(0.940);transform-origin:left center;"><span class="h">ごみ</span>箱</div>
<svg class="a" style="left:28px;top:247.42px" width="7.8" height="9.2" viewBox="0 0 8 10"><path d="M0.300 0.500h6l1.200 1v8h-7.200z" fill="#ffe596"/><path d="M5.800 6.500h1.900v3h-1.900z" fill="#eec456"/><path d="M0.300 8.700h7.400v.8h-7.400z" fill="#f3d372"/></svg>
<div class="t" style="top:250.00px;font-size:6.6px;color:#222;left:39.00px;transform:scaleX(0.937);transform-origin:left center;">2022 年賀状</div>
<svg class="a" style="left:28px;top:260.55px" width="7.8" height="9.2" viewBox="0 0 8 10"><path d="M0.300 0.500h6l1.200 1v8h-7.200z" fill="#ffe596"/><path d="M5.800 6.500h1.900v3h-1.900z" fill="#eec456"/><path d="M0.300 8.700h7.400v.8h-7.400z" fill="#f3d372"/></svg>
<div class="t" style="top:262.00px;font-size:6.6px;color:#222;left:39.00px;transform:scaleX(0.941);transform-origin:left center;">File</div>
<svg class="a" style="left:28px;top:273.68px" width="7.8" height="9.2" viewBox="0 0 8 10"><path d="M0.300 0.500h6l1.200 1v8h-7.200z" fill="#ffe596"/><path d="M5.800 6.500h1.900v3h-1.900z" fill="#eec456"/><path d="M0.300 8.700h7.400v.8h-7.400z" fill="#f3d372"/></svg>
<div class="t" style="top:275.00px;font-size:6.6px;color:#222;left:39.00px;transform:scaleX(0.964);transform-origin:left center;">images</div>
<svg class="a" style="left:28px;top:286.81px" width="7.8" height="9.2" viewBox="0 0 8 10"><path d="M0.300 0.500h6l1.200 1v8h-7.200z" fill="#ffe596"/><path d="M5.800 6.500h1.900v3h-1.900z" fill="#eec456"/><path d="M0.300 8.700h7.400v.8h-7.400z" fill="#f3d372"/></svg>
<div class="t" style="top:288.00px;font-size:6.6px;color:#222;left:39.00px;transform:scaleX(0.931);transform-origin:left center;">images (1)</div>
<svg class="a" style="left:28px;top:299.94px" width="7.8" height="9.2" viewBox="0 0 8 10"><path d="M0.300 0.500h6l1.200 1v8h-7.200z" fill="#ffe596"/><path d="M5.800 6.500h1.900v3h-1.900z" fill="#eec456"/><path d="M0.300 8.700h7.400v.8h-7.400z" fill="#f3d372"/></svg>
<div class="t" style="top:301.00px;font-size:6.6px;color:#222;left:39.00px;transform:scaleX(0.936);transform-origin:left center;">imagess</div>
<svg class="a" style="left:28px;top:313.07px" width="7.8" height="9.2" viewBox="0 0 8 10"><path d="M0.300 0.500h6l1.200 1v8h-7.200z" fill="#ffe596"/><path d="M5.800 6.500h1.900v3h-1.900z" fill="#eec456"/><path d="M0.300 8.700h7.400v.8h-7.400z" fill="#f3d372"/></svg>
<div class="t" style="top:315.00px;font-size:6.6px;color:#222;left:39.00px;transform:scaleX(1.056);transform-origin:left center;">lightbox</div>
<svg class="a" style="left:28px;top:326.2px" width="7.8" height="9.2" viewBox="0 0 8 10"><path d="M0.300 0.500h6l1.200 1v8h-7.200z" fill="#ffe596"/><path d="M5.800 6.500h1.900v3h-1.900z" fill="#eec456"/><path d="M0.300 8.700h7.400v.8h-7.400z" fill="#f3d372"/></svg>
<div class="t" style="top:328.00px;font-size:6.6px;color:#222;left:39.00px;transform:scaleX(1.056);transform-origin:left center;">mri_merec-light</div>
<svg class="a" style="left:28px;top:339.33px" width="7.8" height="9.2" viewBox="0 0 8 10"><path d="M0.300 0.500h6l1.200 1v8h-7.200z" fill="#ffe596"/><path d="M5.800 6.500h1.900v3h-1.900z" fill="#eec456"/><path d="M0.300 8.700h7.400v.8h-7.400z" fill="#f3d372"/></svg>
<div class="t" style="top:341.00px;font-size:6.6px;color:#222;left:39.00px;transform:scaleX(0.987);transform-origin:left center;">scrollreveal-master</div>
<svg class="a" style="left:28px;top:352.46px" width="7.8" height="9.2" viewBox="0 0 8 10"><path d="M0.300 0.500h6l1.200 1v8h-7.200z" fill="#ffe596"/><path d="M5.800 6.500h1.900v3h-1.900z" fill="#eec456"/><path d="M0.300 8.700h7.400v.8h-7.400z" fill="#f3d372"/></svg>
<div class="t" style="top:355.00px;font-size:6.6px;color:#222;left:39.00px;transform:scaleX(0.947);transform-origin:left center;">SNS <span class="k">アイコン</span></div>
<svg class="a" style="left:28px;top:365.59px" width="7.8" height="9.2" viewBox="0 0 8 10"><path d="M0.300 0.500h6l1.200 1v8h-7.200z" fill="#ffe596"/><path d="M5.800 6.500h1.900v3h-1.900z" fill="#eec456"/><path d="M0.300 8.700h7.400v.8h-7.400z" fill="#f3d372"/></svg>
<div class="t" style="top:368.00px;font-size:6.6px;color:#222;left:39.00px;transform:scaleX(0.930);transform-origin:left center;">SNS<span class="k">スクショ</span></div>
<svg class="a" style="left:28px;top:378.72px" width="7.8" height="9.2" viewBox="0 0 8 10"><path d="M0.300 0.500h6l1.200 1v8h-7.200z" fill="#ffe596"/><path d="M5.800 6.500h1.900v3h-1.900z" fill="#eec456"/><path d="M0.300 8.700h7.400v.8h-7.400z" fill="#f3d372"/></svg>
<div class="t" style="top:380.00px;font-size:6.6px;color:#222;left:39.00px;transform:scaleX(1.026);transform-origin:left center;">template-aoba.mri-design.net</div>
<svg class="a" style="left:28px;top:391.85px" width="7.8" height="9.2" viewBox="0 0 8 10"><path d="M0.300 0.500h6l1.200 1v8h-7.200z" fill="#ffe596"/><path d="M5.800 6.500h1.900v3h-1.900z" fill="#eec456"/><path d="M0.300 8.700h7.400v.8h-7.400z" fill="#f3d372"/></svg>
<div class="t" style="top:393.00px;font-size:6.6px;color:#222;left:39.00px;transform:scaleX(1.035);transform-origin:left center;">template-bluelight.mri-design.net</div>
<div class="a" style="left:140.5px;top:193.5px;width:8.7px;height:197px;background:#f0f0f0;"></div>
<div class="a" style="left:140.8px;top:334.8px;width:7.6px;height:32.5px;background:#c1c1c1;"></div>
<svg class="a" style="left:141.5px;top:196.5px" width="6" height="4" viewBox="0 0 6 4"><path d="M.7 3.200l2.300-2.300 2.300 2.300" fill="none" stroke="#505050" stroke-width="1"/></svg>
<svg class="a" style="left:141.6px;top:393px" width="6" height="4" viewBox="0 0 6 4"><path d="M.7.8l2.300 2.300 2.300-2.300" fill="none" stroke="#505050" stroke-width="1"/></svg>
<div class="t" style="top:198.00px;font-size:6.6px;color:#4c607a;left:161.00px;transform:scaleX(0.910);transform-origin:left center;">名前</div>
<svg class="a" style="left:226px;top:193.500px" width="6" height="3" viewBox="0 0 6 3"><path d="M.6 2.600l2.400-2 2.400 2" fill="none" stroke="#999" stroke-width=".6"/></svg>
<div class="t" style="top:198.00px;font-size:6.6px;color:#4c607a;left:304.00px;transform:scaleX(0.948);transform-origin:left center;">更新日時</div>
<div class="t" style="top:198.00px;font-size:6.6px;color:#4c607a;left:382.00px;transform:scaleX(0.963);transform-origin:left center;">種類</div>
<div class="t" style="top:198.00px;font-size:6.6px;color:#4c607a;left:447.50px;transform:scaleX(1.059);transform-origin:left center;clip-path:inset(0 70% 0 0);"><span class="k">サイズ</span></div>
<div class="a" style="left:300px;top:195px;width:1px;height:10.5px;background:#e5e5e5;"></div>
<div class="a" style="left:379px;top:195px;width:1px;height:10.5px;background:#e5e5e5;"></div>
<div class="a" style="left:444.7px;top:195px;width:1px;height:10.5px;background:#e5e5e5;"></div>
<div class="a" style="left:158.5px;top:209.4px;width:293.5px;height:13px;background:#cce8ff;"></div>
<svg class="a" style="left:163px;top:212px" width="7" height="8" viewBox="0 0 7 8"><path d="M.4.400h4l2 2v5.200h-6z" fill="#fff" stroke="#a8a8a8" stroke-width=".6"/></svg>
<div class="t" style="top:213.00px;font-size:6.6px;color:#111;left:172.00px;transform:scaleX(1.062);transform-origin:left center;">wp-config.php</div>
<div class="t" style="top:214.00px;font-size:6.6px;color:#6d6d6d;left:304.00px;transform:scaleX(0.935);transform-origin:left center;">2025/06/20 16:57</div>
<div class="t" style="top:214.00px;font-size:6.6px;color:#6d6d6d;left:382.00px;transform:scaleX(0.941);transform-origin:left center;">PHP <span class="k">ファイル</span></div>
<div class="a" style="left:151.5px;top:390.5px;width:300px;height:8.5px;background:#f0f0f0;"></div>
<div class="a" style="left:160.8px;top:391px;width:246.5px;height:7.5px;background:#cdcdcd;"></div>
<svg class="a" style="left:153.5px;top:391.7px" width="4" height="6" viewBox="0 0 4 6"><path d="M3.200.7l-2.300 2.300 2.300 2.300" fill="none" stroke="#505050" stroke-width="1"/></svg>
<svg class="a" style="left:445px;top:391.7px" width="4" height="6" viewBox="0 0 4 6"><path d="M.8.7l2.300 2.300-2.300 2.300" fill="none" stroke="#505050" stroke-width="1"/></svg>
<div class="a" style="left:10px;top:398.8px;width:441.5px;height:13.2px;background:#fff;"></div>
<div class="t" style="top:403.00px;font-size:6.6px;color:#333;left:17.50px;transform:scaleX(0.951);transform-origin:left center;">1 個<span class="h">の</span>項目</div>
<div class="t" style="top:403.00px;font-size:6.6px;color:#333;left:59.50px;transform:scaleX(0.950);transform-origin:left center;">1 個<span class="h">の</span>項目<span class="h">を</span>選択  3.23 KB</div>
<div class="a" style="left:425.5px;top:399.3px;width:11.8px;height:12.4px;background:#cce8ff;border:1px solid #7fc0f5;"></div>
<svg class="a" style="left:427.500px;top:401.500px" width="8" height="8" viewBox="0 0 8 8"><path d="M.5 1h1.300M.5 3h1.300M.5 5h1.300M.5 7h1.300" stroke="#d9a080" stroke-width=".7"/><path d="M3 1h1.800M5.500 1h2M3 3h1.800M5.500 3h2M3 5h1.800M5.500 5h2M3 7h1.800M5.500 7h2" stroke="#8a9ab0" stroke-width=".55"/></svg>
<svg class="a" style="left:439.500px;top:402.500px" width="8" height="6" viewBox="0 0 8 6"><rect x=".4" y=".4" width="7.200" height="5.200" fill="#dfe9f5" stroke="#8a99ad" stroke-width=".6"/><rect x="1.500" y="1.800" width="3" height="2" fill="#44608a"/></svg>
<div class="a" style="left:452px;top:3px;width:568.5px;height:446px;background:#f0f0f0;box-shadow:0 0 3px rgba(0,0,0,.55);"></div>
<div class="a" style="left:452px;top:3px;width:568.5px;height:27px;background:#fff;"></div>
<div class="a" style="left:456px;top:7px;width:8.5px;height:8.5px;background:#b3141c;border-radius:1px;"></div>
<div class="t" style="top:8.00px;font-size:6px;color:#fff;font-weight:bold;left:457.00px;transform:scaleX(0.974);transform-origin:left center;font-style:italic;">Fz</div>
<div class="t" style="top:8.00px;font-size:6.6px;color:#9b9b9b;left:467.00px;transform:scaleX(0.984);transform-origin:left center;">mri98 - mri98@sv12100.xserver.jp - FileZilla</div>
<svg class="a" style="left:952px;top:6px" width="62" height="11" viewBox="0 0 62 11"><path d="M3.500 5.500h6" stroke="#9a9a9a" stroke-width=".8"/><rect x="28" y="2.800" width="5.500" height="5.500" fill="none" stroke="#9a9a9a" stroke-width=".8"/><path d="M52.800 2.800l5.500 5.500M58.300 2.800l-5.500 5.500" stroke="#9a9a9a" stroke-width=".8"/></svg>
<div class="t" style="top:23.00px;font-size:6.6px;color:#6e6e6e;left:454.60px;transform:scaleX(0.936);transform-origin:left center;"><span class="k">ファイル</span>(F)</div>
<div class="t" style="top:23.00px;font-size:6.6px;color:#6e6e6e;left:489.80px;transform:scaleX(0.905);transform-origin:left center;">編集(E)</div>
<div class="t" style="top:23.00px;font-size:6.6px;color:#6e6e6e;left:517.60px;transform:scaleX(0.973);transform-origin:left center;">表示(V)</div>
<div class="t" style="top:23.00px;font-size:6.6px;color:#6e6e6e;left:547.00px;transform:scaleX(0.907);transform-origin:left center;">転送(T)</div>
<div class="t" style="top:23.00px;font-size:6.6px;color:#6e6e6e;left:575.40px;transform:scaleX(0.922);transform-origin:left center;"><span class="k">サーバー</span>(S)</div>
<div class="t" style="top:23.00px;font-size:6.6px;color:#6e6e6e;left:610.00px;transform:scaleX(0.951);transform-origin:left center;"><span class="k">ブックマーク</span>(B)</div>
<div class="t" style="top:23.00px;font-size:6.6px;color:#6e6e6e;left:654.80px;transform:scaleX(1.000);transform-origin:left center;"><span class="k">ヘルプ</span>(H)</div>
<div class="t" style="top:23.00px;font-size:6.6px;color:#6e6e6e;left:687.60px;transform:scaleX(0.949);transform-origin:left center;">新<span class="k">バージョン</span><span class="h">を</span>利用<span class="h">できます</span>!(N)</div>
<div class="a" style="left:452px;top:30px;width:568.5px;height:16px;background:#f1f1f1;"></div>
<div class="a" style="left:452px;top:45.7px;width:568.5px;height:0.8px;background:#b9b9b9;"></div>
<svg class="a" style="left:455px;top:32.500px" width="11" height="11" viewBox="0 0 11 11"><rect x=".5" y=".5" width="3" height="3.500" fill="#e8e8e8" stroke="#777" stroke-width=".6"/><rect x="6.500" y=".5" width="3" height="3.500" fill="#e8e8e8" stroke="#777" stroke-width=".6"/><rect x=".5" y="6" width="3" height="3.500" fill="#e8e8e8" stroke="#777" stroke-width=".6"/><rect x="6.500" y="6" width="3" height="3.500" fill="#e8e8e8" stroke="#777" stroke-width=".6"/><path d="M0 5h10.500M0 10.500h10.500" stroke="#555" stroke-width=".6"/><path d="M1 .5h2M7 .5h2" stroke="#3b7bd6" stroke-width=".8"/></svg>
<svg class="a" style="left:468.500px;top:36.500px" width="5" height="3" viewBox="0 0 5 3"><path d="M.3.300h4.400l-2.200 2.400z" fill="#222"/></svg>
<div class="a" style="left:476.3px;top:32.5px;width:0.8px;height:11.5px;background:#8c8c8c;"></div>
<div class="a" style="left:480px;top:31px;width:14.5px;height:13.5px;background:#cde6f7;border:.8px solid #90c8f6;"></div>
<div class="a" style="left:494.5px;top:31px;width:14.5px;height:13.5px;background:#cde6f7;border:.8px solid #90c8f6;"></div>
<div class="a" style="left:509px;top:31px;width:14.5px;height:13.5px;background:#cde6f7;border:.8px solid #90c8f6;"></div>
<div class="a" style="left:523.5px;top:31px;width:14.5px;height:13.5px;background:#cde6f7;border:.8px solid #90c8f6;"></div>
<svg class="a" style="left:483.500px;top:33px" width="8" height="10" viewBox="0 0 8 10"><path d="M.4.400h5l2 2v7.200h-7z" fill="#f3f3f3" stroke="#8d8d8d" stroke-width=".6"/><path d="M2 3.500h2M2.500 5.500h2.500" stroke="#3aa64a" stroke-width=".8"/><path d="M3 4.500h2.500M2 6.800h2" stroke="#3b7bd6" stroke-width=".8"/></svg>
<svg class="a" style="left:496.500px;top:33px" width="11" height="10" viewBox="0 0 11 10"><rect x=".4" y=".4" width="10.200" height="9.200" fill="#e6e6e6" stroke="#8d8d8d" stroke-width=".6"/><rect x=".8" y=".8" width="9.400" height="1.300" fill="#777"/><rect x=".8" y="2.200" width="3.400" height="1.800" fill="#3cc04a"/><rect x="4.600" y="2.200" width="5.600" height="7" fill="#f6f6f6"/></svg>
<svg class="a" style="left:511px;top:33px" width="11" height="10" viewBox="0 0 11 10"><rect x=".4" y=".4" width="10.200" height="9.200" fill="#e6e6e6" stroke="#8d8d8d" stroke-width=".6"/><rect x=".8" y=".8" width="9.400" height="1.300" fill="#777"/><rect x="6.800" y="2.200" width="3.400" height="1.800" fill="#2f7fe0"/><rect x=".8" y="2.200" width="5.600" height="7" fill="#f6f6f6"/></svg>
<svg class="a" style="left:526px;top:33px" width="10" height="10" viewBox="0 0 10 10"><path d="M0 3h9M6.500 1l2.500 2-2.500 2" fill="none" stroke="#2fb344" stroke-width="1.500"/><path d="M10 7.200h-9M3.500 5.200l-2.500 2 2.500 2" fill="none" stroke="#2f7fe0" stroke-width="1.500"/></svg>
<div class="a" style="left:541.3px;top:32.5px;width:0.8px;height:11.5px;background:#8c8c8c;"></div>
<svg class="a" style="left:544.500px;top:32px" width="11" height="11" viewBox="0 0 11 11"><path d="M1.300 5a4.200 4.200 0 0 1 7.500-2" fill="none" stroke="#2a78d8" stroke-width="2"/><path d="M10.500.8v4h-4z" fill="#2a78d8"/><path d="M9.700 6a4.200 4.200 0 0 1-7.500 2" fill="none" stroke="#2fb344" stroke-width="2"/><path d="M.5 10.200v-4h4z" fill="#2fb344"/></svg>
<svg class="a" style="left:559.500px;top:32px" width="11" height="11" viewBox="0 0 11 11"><path d="M1.500 0v11" stroke="#2fb344" stroke-width="1.500"/><path d="M4.500 0v11" stroke="#2a78d8" stroke-width="1.700" stroke-dasharray="1.500 .7"/><circle cx="8.500" cy="4" r="1.500" fill="none" stroke="#555" stroke-width=".8"/><path d="M8.500 6.500v3.500" stroke="#555" stroke-width=".9"/></svg>
<svg class="a" style="left:574.500px;top:32px" width="11" height="11" viewBox="0 0 11 11"><circle cx="5.500" cy="5.500" r="5.200" fill="#2e2e2e"/><path d="M3.500 3.500l4 4M7.500 3.500l-4 4" stroke="#fff" stroke-width="1.400"/></svg>
<svg class="a" style="left:589.500px;top:32px" width="11" height="11" viewBox="0 0 11 11"><rect x="1" y=".5" width="4.500" height="3.500" fill="#dfe8f5" stroke="#8fa3bd" stroke-width=".5"/><path d="M3 4v6h1.500" fill="none" stroke="#aaa" stroke-width=".7"/><path d="M5.800 6l4 4M9.800 6l-4 4" stroke="#d42020" stroke-width="1.500"/></svg>
<svg class="a" style="left:604.500px;top:32px" width="11" height="11" viewBox="0 0 11 11"><rect x="1" y=".5" width="4.500" height="3.500" fill="#e4e4e4" stroke="#aaa" stroke-width=".5"/><path d="M3 4v6h1.500" fill="none" stroke="#aaa" stroke-width=".7"/><path d="M5.300 7.500l1.700 2 3.500-4.500" fill="none" stroke="#7a7a7a" stroke-width="1.400"/></svg>
<div class="a" style="left:618.3px;top:32.5px;width:0.8px;height:11.5px;background:#8c8c8c;"></div>
<svg class="a" style="left:622.500px;top:32.500px" width="11" height="10" viewBox="0 0 11 10"><path d="M.5 1h10" stroke="#444" stroke-width="1.200"/><path d="M.5 3.500h4" stroke="#d94040" stroke-width="1.100"/><path d="M.5 5.800h4" stroke="#3aa64a" stroke-width="1.100"/><path d="M.5 8h4" stroke="#e4b43a" stroke-width="1.100"/><path d="M5.500 3.500h5M5.500 5.800h5M5.500 8h5" stroke="#777" stroke-width=".9"/><path d="M5 2v7.500" stroke="#444" stroke-width=".7"/></svg>
<svg class="a" style="left:637.500px;top:32px" width="11" height="11" viewBox="0 0 11 11"><circle cx="5" cy="4.500" r="3.300" fill="#f4f4f4" stroke="#555" stroke-width=".9"/><path d="M7.300 7l3 3.200" stroke="#444" stroke-width="1.300"/><path d="M.5 7.500h2M.5 9h2.500" stroke="#3aa64a" stroke-width=".7"/><circle cx="8.500" cy="1.500" r="1" fill="#d94040"/></svg>
<svg class="a" style="left:653px;top:32.500px" width="11" height="10" viewBox="0 0 11 10"><rect x="2.500" y=".5" width="8" height="9" fill="#f7f7f7" stroke="#ddd" stroke-width=".5"/><path d="M1.500 5a3.300 3.300 0 0 1 5.800-1.800" fill="none" stroke="#3aa64a" stroke-width="1.600"/><path d="M8.500 5a3.300 3.300 0 0 1-5.800 1.800" fill="none" stroke="#e4b43a" stroke-width="1.600"/></svg>
<svg class="a" style="left:667.500px;top:32.500px" width="11" height="10" viewBox="0 0 11 10"><rect x=".5" y="3" width="4.300" height="6" rx="1.500" fill="#3d2f20"/><rect x="6.200" y="3" width="4.300" height="6" rx="1.500" fill="#3d2f20"/><rect x="1.500" y=".8" width="2.600" height="3" fill="#5b4630"/><rect x="7" y=".8" width="2.600" height="3" fill="#5b4630"/><rect x="4.500" y="3.500" width="2" height="2" fill="#7a6040"/><circle cx="2.600" cy="6.500" r="1" fill="#c9a15a"/><circle cx="8.400" cy="6.500" r="1" fill="#c9a15a"/></svg>
<div class="a" style="left:452px;top:46.5px;width:568.5px;height:18px;background:#f1f1f1;"></div>
<div class="t" style="top:53.00px;font-size:6.6px;color:#1c1c1c;left:453.30px;transform:scaleX(1.014);transform-origin:left center;"><span class="k">ホスト</span>(H):</div>
<div class="t" style="top:53.00px;font-size:6.6px;color:#1c1c1c;left:549.00px;transform:scaleX(0.966);transform-origin:left center;"><span class="k">ユーザー</span>名(U):</div>
<div class="t" style="top:53.00px;font-size:6.6px;color:#1c1c1c;left:655.50px;transform:scaleX(0.995);transform-origin:left center;"><span class="k">パスワード</span>(W):</div>
<div class="t" style="top:53.00px;font-size:6.6px;color:#1c1c1c;left:761.50px;transform:scaleX(0.962);transform-origin:left center;"><span class="k">ポート</span>(P):</div>
<div class="a" style="left:482.5px;top:49.3px;width:60.5px;height:12.3px;background:#fff;border:.8px solid #8f8f8f;"></div>
<div class="a" style="left:588.8px;top:49.3px;width:61px;height:12.3px;background:#fff;border:.8px solid #8f8f8f;"></div>
<div class="a" style="left:695px;top:49.3px;width:60px;height:12.3px;background:#fff;border:.8px solid #8f8f8f;"></div>
<div class="a" style="left:789px;top:49.3px;width:25.5px;height:12.3px;background:#fff;border:.8px solid #8f8f8f;"></div>
<div class="a" style="left:820.7px;top:50px;width:52.2px;height:11.5px;background:#e3e3e3;border:1.200px solid #0078d7;"></div>
<div class="t" style="top:53.00px;font-size:6.6px;color:#1c1c1c;left:826.00px;transform:scaleX(0.976);transform-origin:left center;"><span class="k">クイック</span>接続(Q)</div>
<div class="a" style="left:875px;top:50px;width:9.8px;height:11.5px;background:#e1e1e1;border:.8px solid #adadad;"></div>
<svg class="a" style="left:877.500px;top:54.300px" width="5" height="3" viewBox="0 0 5 3"><path d="M.2.300h4.600l-2.300 2.500z" fill="#333"/></svg>
<div class="a" style="left:452px;top:64.2px;width:568.5px;height:1px;background:#7d7d7d;"></div>
<div class="a" style="left:453px;top:65.2px;width:566.5px;height:94.3px;background:#fff;"></div>
<div class="a" style="left:452.2px;top:65px;width:1px;height:94.5px;background:#777;"></div>
<div class="a" style="left:452px;top:159.5px;width:568.5px;height:0.8px;background:#c0c0c0;"></div>
<div class="a" style="left:1009.5px;top:65.2px;width:10px;height:94.3px;background:#f0f0f0;"></div>
<svg class="a" style="left:1011.5px;top:68.3px" width="6" height="4" viewBox="0 0 6 4"><path d="M.7 3.200l2.300-2.300 2.300 2.300" fill="none" stroke="#505050" stroke-width="1"/></svg>
<svg class="a" style="left:1011.5px;top:153.5px" width="6" height="4" viewBox="0 0 6 4"><path d="M.7.8l2.300 2.300 2.300-2.300" fill="none" stroke="#505050" stroke-width="1"/></svg>
<div class="t" style="top:68.00px;font-size:6.6px;color:#1c1c1c;left:454.00px;transform:scaleX(0.918);transform-origin:left center;">状態:</div>
<div class="t" style="top:68.00px;font-size:6.6px;color:#1c1c1c;left:484.00px;transform:scaleX(1.054);transform-origin:left center;">"/mri-design.net/public_html/template-03.mri-design.net/wp-content"</div>
<div class="t" style="top:68.00px;font-size:6.6px;color:#1c1c1c;left:696.10px;transform:scaleX(0.981);transform-origin:left center;">のディレクトリ リストの表示成功</div>
<div class="t" style="top:79.00px;font-size:6.6px;color:#1c1c1c;left:454.00px;transform:scaleX(0.918);transform-origin:left center;">状態:</div>
<div class="t" style="top:78.00px;font-size:6.6px;color:#1c1c1c;left:484.00px;transform:scaleX(1.052);transform-origin:left center;">"/mri-design.net/public_html/template-03.mri-design.net"</div>
<div class="t" style="top:79.00px;font-size:6.6px;color:#1c1c1c;left:659.80px;transform:scaleX(0.975);transform-origin:left center;">のディレクトリ リストを取得中...</div>
<div class="t" style="top:90.00px;font-size:6.6px;color:#1c1c1c;left:454.00px;transform:scaleX(0.918);transform-origin:left center;">状態:</div>
<div class="t" style="top:89.00px;font-size:6.6px;color:#1c1c1c;left:484.00px;transform:scaleX(1.052);transform-origin:left center;">"/mri-design.net/public_html/template-03.mri-design.net"</div>
<div class="t" style="top:90.00px;font-size:6.6px;color:#1c1c1c;left:659.80px;transform:scaleX(0.982);transform-origin:left center;">のディレクトリ リストの表示成功</div>
<div class="t" style="top:101.00px;font-size:6.6px;color:#1c1c1c;left:454.00px;transform:scaleX(0.918);transform-origin:left center;">状態:</div>
<div class="t" style="top:100.00px;font-size:6.6px;color:#1c1c1c;left:484.00px;transform:scaleX(1.037);transform-origin:left center;">"/mri-design.net/public_html"</div>
<div class="t" style="top:101.00px;font-size:6.6px;color:#1c1c1c;left:574.10px;transform:scaleX(1.002);transform-origin:left center;">のディレクトリ リストを取得中...</div>
<div class="t" style="top:112.00px;font-size:6.6px;color:#1c1c1c;left:454.00px;transform:scaleX(0.918);transform-origin:left center;">状態:</div>
<div class="t" style="top:111.00px;font-size:6.6px;color:#1c1c1c;left:484.00px;transform:scaleX(1.037);transform-origin:left center;">"/mri-design.net/public_html"</div>
<div class="t" style="top:112.00px;font-size:6.6px;color:#1c1c1c;left:574.10px;transform:scaleX(1.001);transform-origin:left center;">のディレクトリ リストの表示成功</div>
<div class="t" style="top:123.00px;font-size:6.6px;color:#1c1c1c;left:454.00px;transform:scaleX(0.918);transform-origin:left center;">状態:</div>
<div class="t" style="top:122.00px;font-size:6.6px;color:#1c1c1c;left:484.00px;transform:scaleX(1.077);transform-origin:left center;">"/mri-design.net"</div>
<div class="t" style="top:123.00px;font-size:6.6px;color:#1c1c1c;left:539.50px;transform:scaleX(0.978);transform-origin:left center;">のディレクトリ リストを取得中...</div>
<div class="t" style="top:134.00px;font-size:6.6px;color:#1c1c1c;left:454.00px;transform:scaleX(0.918);transform-origin:left center;">状態:</div>
<div class="t" style="top:133.00px;font-size:6.6px;color:#1c1c1c;left:484.00px;transform:scaleX(1.077);transform-origin:left center;">"/mri-design.net"</div>
<div class="t" style="top:134.00px;font-size:6.6px;color:#1c1c1c;left:539.50px;transform:scaleX(0.982);transform-origin:left center;">のディレクトリ リストの表示成功</div>
<div class="t" style="top:145.00px;font-size:6.6px;color:#1c1c1c;left:454.00px;transform:scaleX(0.918);transform-origin:left center;">状態:</div>
<div class="t" style="top:145.00px;font-size:6.6px;color:#1c1c1c;left:484.00px;transform:scaleX(0.999);transform-origin:left center;">サーバーによって接続が閉じられました</div>
<div class="a" style="left:453px;top:163.5px;width:42.3px;height:13px;background:#f0f0f0;border:.8px solid #9a9a9a;border-top:1px solid #6f6f6f;"></div>
<div class="t" style="top:168.00px;font-size:6.6px;color:#1c1c1c;left:455.30px;transform:scaleX(0.992);transform-origin:left center;"><span class="k">ローカル</span> <span class="k">サイト</span>:</div>
<div class="a" style="left:496px;top:163.5px;width:173.5px;height:13px;background:#fff;border:.8px solid #c8c8c8;border-top:1px solid #6f6f6f;border-bottom-color:#9a9a9a;"></div>
<div class="t" style="top:167.00px;font-size:6.6px;color:#1c1c1c;left:498.00px;transform:scaleX(0.891);transform-origin:left center;">C:¥Users¥sawad¥</div>
<svg class="a" style="left:662.500px;top:168px" width="6" height="4" viewBox="0 0 6 4"><path d="M.5.700l2.500 2.500 2.500-2.500" fill="none" stroke="#444" stroke-width=".7"/></svg>
<div class="a" style="left:673.5px;top:163.5px;width:41px;height:13px;background:#f0f0f0;border:.8px solid #9a9a9a;border-top:1px solid #6f6f6f;"></div>
<div class="t" style="top:168.00px;font-size:6.6px;color:#1c1c1c;left:676.00px;transform:scaleX(0.953);transform-origin:left center;"><span class="k">リモート</span> <span class="k">サイト</span>:</div>
<div class="a" style="left:715px;top:163.5px;width:304.5px;height:13px;background:#fff;border:.8px solid #c8c8c8;border-top:1px solid #6f6f6f;border-bottom-color:#9a9a9a;"></div>
<div class="t" style="top:167.00px;font-size:6.6px;color:#1c1c1c;left:717.60px;transform:scaleX(1.050);transform-origin:left center;">/mri-design.net/public_html/template-03.mri-design.net</div>
<svg class="a" style="left:1012.500px;top:168px" width="6" height="4" viewBox="0 0 6 4"><path d="M.5.700l2.500 2.500 2.500-2.500" fill="none" stroke="#444" stroke-width=".7"/></svg>
<div class="a" style="left:453px;top:176.5px;width:216.5px;height:40.8px;background:#fff;border:.8px solid #dcdcdc;border-top:none;border-left-color:#8c8c8c;border-bottom-color:#b8b8b8;"></div>
<div class="a" style="left:673.5px;top:176.5px;width:346px;height:40.8px;background:#fff;border:.8px solid #dcdcdc;border-top:none;border-left-color:#8c8c8c;border-bottom-color:#b8b8b8;"></div>
<div class="a" style="left:479.8px;top:177px;width:0.6px;height:40px;background:#cfcfcf;"></div>
<div class="a" style="left:490px;top:177px;width:0.6px;height:30px;background:#cfcfcf;"></div>
<div class="a" style="left:500px;top:177px;width:0.6px;height:3px;background:#cfcfcf;"></div>
<div class="a" style="left:502.5px;top:181.6px;width:4px;height:0.6px;background:#cfcfcf;"></div>
<div class="a" style="left:492.5px;top:191.6px;width:4px;height:0.6px;background:#cfcfcf;"></div>
<div class="a" style="left:492.5px;top:201.5px;width:4px;height:0.6px;background:#cfcfcf;"></div>
<div class="a" style="left:482.5px;top:211px;width:4px;height:0.6px;background:#cfcfcf;"></div>
<svg class="a" style="left:497.5px;top:178.85px" width="5.500" height="5.500" viewBox="0 0 5.500 5.500"><rect x=".3" y=".3" width="4.900" height="4.900" fill="#fff" stroke="#969696" stroke-width=".6"/><path d="M1.300 2.750h2.900M2.750 1.300v2.900" stroke="#3a5fae" stroke-width=".7"/></svg>
<svg class="a" style="left:506.500px;top:177.500px" width="8" height="9" viewBox="0 0 8 9"><circle cx="4" cy="2.200" r="1.900" fill="#5a3a22"/><path d="M.8 8.500c0-3 1.400-4 3.200-4s3.200 1 3.200 4z" fill="#2d9a6a"/><path d="M3.200 4.800l.8 2 .8-2z" fill="#fff"/></svg>
<div class="a" style="left:516px;top:177.3px;width:20.5px;height:8.8px;background:#f0f0f0;"></div>
<div class="t" style="top:178.00px;font-size:6.6px;color:#1c1c1c;left:517.30px;transform:scaleX(0.944);transform-origin:left center;">sawad</div>
<svg class="a" style="left:487.3px;top:188.85px" width="5.500" height="5.500" viewBox="0 0 5.500 5.500"><rect x=".3" y=".3" width="4.900" height="4.900" fill="#fff" stroke="#969696" stroke-width=".6"/><path d="M1.300 2.750h2.900M2.750 1.300v2.900" stroke="#3a5fae" stroke-width=".7"/></svg>
<svg class="a" style="left:496px;top:187px" width="8" height="9.3" viewBox="0 0 8 10"><path d="M0.300 0.500h6l1.200 1v8h-7.200z" fill="#ffe596"/><path d="M5.800 6.500h1.900v3h-1.900z" fill="#eec456"/><path d="M0.300 8.700h7.400v.8h-7.400z" fill="#f3d372"/></svg>
<div class="t" style="top:188.00px;font-size:6.6px;color:#1c1c1c;left:507.00px;transform:scaleX(1.003);transform-origin:left center;">usr</div>
<svg class="a" style="left:487.3px;top:198.75px" width="5.500" height="5.500" viewBox="0 0 5.500 5.500"><rect x=".3" y=".3" width="4.900" height="4.900" fill="#fff" stroke="#969696" stroke-width=".6"/><path d="M1.300 2.750h2.900M2.750 1.300v2.900" stroke="#3a5fae" stroke-width=".7"/></svg>
<svg class="a" style="left:496px;top:197px" width="8" height="9.3" viewBox="0 0 8 10"><path d="M0.300 0.500h6l1.200 1v8h-7.200z" fill="#ffe596"/><path d="M5.800 6.500h1.900v3h-1.900z" fill="#eec456"/><path d="M0.300 8.700h7.400v.8h-7.400z" fill="#f3d372"/></svg>
<div class="t" style="top:198.00px;font-size:6.6px;color:#1c1c1c;left:507.00px;transform:scaleX(1.021);transform-origin:left center;">Windows</div>
<svg class="a" style="left:477.2px;top:208.25px" width="5.500" height="5.500" viewBox="0 0 5.500 5.500"><rect x=".3" y=".3" width="4.900" height="4.900" fill="#fff" stroke="#969696" stroke-width=".6"/><path d="M1.300 2.750h2.900M2.750 1.300v2.900" stroke="#3a5fae" stroke-width=".7"/></svg>
<svg class="a" style="left:486px;top:207.500px" width="8" height="7" viewBox="0 0 8 7"><path d="M1.500.8h5l1.200 3.500h-7.400z" fill="#d5d5d5"/><rect x=".3" y="4" width="7.400" height="2.300" fill="#3a3a3a"/><rect x="5.500" y="4.700" width="1.300" height=".9" fill="#4fd04f"/></svg>
<div class="t" style="top:209.00px;font-size:6.6px;color:#1c1c1c;left:497.00px;transform:scaleX(0.834);transform-origin:left center;">D:</div>
<div class="a" style="left:660.8px;top:177px;width:8.2px;height:39.8px;background:#f0f0f0;"></div>
<svg class="a" style="left:662px;top:179.8px" width="6" height="4" viewBox="0 0 6 4"><path d="M.7 3.200l2.300-2.300 2.300 2.300" fill="none" stroke="#505050" stroke-width="1"/></svg>
<svg class="a" style="left:662px;top:210.5px" width="6" height="4" viewBox="0 0 6 4"><path d="M.7.8l2.300 2.300 2.300-2.300" fill="none" stroke="#505050" stroke-width="1"/></svg>
<div class="a" style="left:661.3px;top:198.3px;width:7.2px;height:8px;background:#cdcdcd;"></div>
<div class="a" style="left:690.6px;top:177px;width:0.6px;height:40px;background:#cfcfcf;"></div>
<div class="a" style="left:700.6px;top:177px;width:0.6px;height:40px;background:#cfcfcf;"></div>
<div class="a" style="left:711.5px;top:177px;width:0.6px;height:40px;background:#cfcfcf;"></div>
<div class="a" style="left:712px;top:182px;width:5.5px;height:0.6px;background:#cfcfcf;"></div>
<svg class="a" style="left:718px;top:177.5px" width="7.500" height="9" viewBox="0 0 7.500 9"><path d="M.3.500h4.900l2 1.400v6.800h-6.900z" fill="#ffe08a"/><path d="M5.300 2.200h1.900v6.500h-1.900z" fill="#f3c54a"/><path d="M2.400 3.300c0-1.700 2.700-1.700 2.700 0 0 1.100-1.300 1.100-1.300 2.300" fill="none" stroke="#1a1a1a" stroke-width="1.100"/><rect x="3.200" y="6.500" width="1.200" height="1.200" fill="#1a1a1a"/></svg>
<div class="t" style="top:179.00px;font-size:6.6px;color:#1c1c1c;left:729.00px;transform:scaleX(0.906);transform-origin:left center;">sanada</div>
<div class="a" style="left:712px;top:192px;width:5.5px;height:0.6px;background:#cfcfcf;"></div>
<svg class="a" style="left:718px;top:187.5px" width="7.500" height="9" viewBox="0 0 7.500 9"><path d="M.3.500h4.900l2 1.400v6.800h-6.900z" fill="#ffe08a"/><path d="M5.300 2.200h1.900v6.500h-1.900z" fill="#f3c54a"/><path d="M2.400 3.300c0-1.700 2.700-1.700 2.700 0 0 1.100-1.300 1.100-1.300 2.300" fill="none" stroke="#1a1a1a" stroke-width="1.100"/><rect x="3.200" y="6.500" width="1.200" height="1.200" fill="#1a1a1a"/></svg>
<div class="t" style="top:189.00px;font-size:6.6px;color:#1c1c1c;left:729.00px;transform:scaleX(1.034);transform-origin:left center;">sugimoto-test.mri-design.net</div>
<div class="a" style="left:712px;top:202px;width:5.5px;height:0.6px;background:#cfcfcf;"></div>
<svg class="a" style="left:718px;top:197.5px" width="7.500" height="9" viewBox="0 0 7.500 9"><path d="M.3.500h4.900l2 1.400v6.800h-6.900z" fill="#ffe08a"/><path d="M5.300 2.200h1.900v6.500h-1.900z" fill="#f3c54a"/><path d="M2.400 3.300c0-1.700 2.700-1.700 2.700 0 0 1.100-1.300 1.100-1.300 2.300" fill="none" stroke="#1a1a1a" stroke-width="1.100"/><rect x="3.200" y="6.500" width="1.200" height="1.200" fill="#1a1a1a"/></svg>
<div class="t" style="top:199.00px;font-size:6.6px;color:#1c1c1c;left:729.00px;transform:scaleX(1.020);transform-origin:left center;">template-01.mri-design.net</div>
<div class="a" style="left:712px;top:212px;width:5.5px;height:0.6px;background:#cfcfcf;"></div>
<svg class="a" style="left:708.8px;top:209.25px" width="5.500" height="5.500" viewBox="0 0 5.500 5.500"><rect x=".3" y=".3" width="4.900" height="4.900" fill="#fff" stroke="#969696" stroke-width=".6"/><path d="M1.300 2.750h2.900" stroke="#3a5fae" stroke-width=".7"/></svg>
<svg class="a" style="left:718px;top:207.4px" width="7.5" height="9.3" viewBox="0 0 8 10"><path d="M0.300 0.500h6l1.200 1v8h-7.200z" fill="#ffe596"/><path d="M5.800 6.500h1.900v3h-1.900z" fill="#eec456"/><path d="M0.300 8.700h7.400v.8h-7.400z" fill="#f3d372"/></svg>
<div class="a" style="left:727.8px;top:207.7px;width:82.5px;height:8.8px;background:#f0f0f0;"></div>
<div class="t" style="top:209.00px;font-size:6.6px;color:#1c1c1c;left:729.00px;transform:scaleX(1.020);transform-origin:left center;">template-03.mri-design.net</div>
<div class="a" style="left:1009.5px;top:177px;width:9.5px;height:39.8px;background:#f0f0f0;"></div>
<svg class="a" style="left:1011.5px;top:179.8px" width="6" height="4" viewBox="0 0 6 4"><path d="M.7 3.200l2.300-2.300 2.300 2.300" fill="none" stroke="#505050" stroke-width="1"/></svg>
<svg class="a" style="left:1011.5px;top:210.5px" width="6" height="4" viewBox="0 0 6 4"><path d="M.7.8l2.300 2.300 2.300-2.300" fill="none" stroke="#505050" stroke-width="1"/></svg>
<div class="a" style="left:1010.3px;top:189.5px;width:7.5px;height:8.3px;background:#cdcdcd;"></div>
<div class="a" style="left:453px;top:220.3px;width:216.5px;height:139px;background:#fff;border:.8px solid #dcdcdc;border-top-color:#828282;border-left-color:#828282;"></div>
<div class="a" style="left:673.5px;top:220.3px;width:346px;height:139px;background:#fff;border:.8px solid #dcdcdc;border-top-color:#828282;border-left-color:#828282;"></div>
<div class="t" style="top:225.00px;font-size:6.6px;color:#1c1c1c;left:455.80px;transform:scaleX(0.948);transform-origin:left center;">名前</div>
<div class="t" style="top:225.00px;font-size:6.6px;color:#1c1c1c;right:411.00px;transform:scaleX(1.025);transform-origin:right center;"><span class="k">サイズ</span></div>
<div class="t" style="top:225.00px;font-size:6.6px;color:#1c1c1c;left:620.00px;transform:scaleX(0.933);transform-origin:left center;">種類</div>
<div class="a" style="left:573.3px;top:221px;width:0.7px;height:12px;background:#e0e0e0;"></div>
<div class="a" style="left:615.8px;top:221px;width:0.7px;height:12px;background:#e0e0e0;"></div>
<svg class="a" style="left:455px;top:235px" width="7.5" height="9.3" viewBox="0 0 8 10"><path d="M0.300 0.500h6l1.200 1v8h-7.200z" fill="#ffe596"/><path d="M5.800 6.500h1.900v3h-1.900z" fill="#eec456"/><path d="M0.300 8.700h7.400v.8h-7.400z" fill="#f3d372"/></svg>
<div class="t" style="top:238.00px;font-size:6.6px;color:#1c1c1c;left:465.00px;transform:scaleX(1.089);transform-origin:left center;">..</div>
<svg class="a" style="left:454.5px;top:246.38px" width="8" height="8" viewBox="0 0 8 8"><rect width="8" height="8" fill="#0c0c14"/><path d="M2.500 2.500l2.500 1.500-2.500 1.500z" fill="#9fb4e8"/></svg>
<div class="t" style="top:248.00px;font-size:6.6px;color:#1c1c1c;left:465.00px;transform:scaleX(0.877);transform-origin:left center;">NTUSER.DAT</div>
<div class="t" style="top:248.00px;font-size:6.6px;color:#1c1c1c;right:411.00px;transform:scaleX(0.905);transform-origin:right center;">8,388,608</div>
<div class="t" style="top:248.00px;font-size:6.6px;color:#1c1c1c;left:620.00px;transform:scaleX(0.915);transform-origin:left center;">DAT <span class="k">ファイル</span></div>
<svg class="a" style="left:455px;top:256.46px" width="7" height="8.500" viewBox="0 0 7 8.500"><path d="M.4.400h4.200l2 2v5.700h-6.200z" fill="#fff" stroke="#9aa9bd" stroke-width=".6"/><rect x="1.700" y="3.200" width="3.200" height="2.600" fill="#dce6f2"/><rect x="2.600" y="3.800" width="1.500" height="1.400" fill="#3f7fd0"/></svg>
<div class="t" style="top:258.00px;font-size:6.6px;color:#1c1c1c;left:465.00px;transform:scaleX(1.013);transform-origin:left center;">btn_print.png</div>
<div class="t" style="top:258.00px;font-size:6.6px;color:#1c1c1c;right:411.00px;transform:scaleX(0.893);transform-origin:right center;">2,066</div>
<div class="t" style="top:259.00px;font-size:6.6px;color:#1c1c1c;left:620.00px;transform:scaleX(0.880);transform-origin:left center;">PNG <span class="k">ファイル</span></div>
<svg class="a" style="left:455px;top:266.84px" width="7" height="8.500" viewBox="0 0 7 8.500"><path d="M.4.400h4.200l2 2v5.700h-6.200z" fill="#fff" stroke="#a9a9a9" stroke-width=".6"/><path d="M1.600 3.500h3.500M1.600 5h3.500M1.600 6.500h3.500" stroke="#d5d5d5" stroke-width=".5"/></svg>
<div class="t" style="top:268.00px;font-size:6.6px;color:#1c1c1c;left:465.00px;transform:scaleX(0.969);transform-origin:left center;">header.php</div>
<div class="t" style="top:269.00px;font-size:6.6px;color:#1c1c1c;right:411.00px;transform:scaleX(0.893);transform-origin:right center;">7,625</div>
<div class="t" style="top:269.00px;font-size:6.6px;color:#1c1c1c;left:620.00px;transform:scaleX(0.901);transform-origin:left center;">PHP <span class="k">ファイル</span></div>
<svg class="a" style="left:455px;top:277.22px" width="7" height="8.500" viewBox="0 0 7 8.500"><path d="M.4.400h4.200l2 2v5.700h-6.200z" fill="#fff" stroke="#a9a9a9" stroke-width=".6"/><path d="M2.300 3v3M4.300 3v3" stroke="#e5b54a" stroke-width=".9"/></svg>
<div class="t" style="top:279.00px;font-size:6.6px;color:#1c1c1c;left:465.00px;transform:scaleX(0.964);transform-origin:left center;">composer.json</div>
<div class="t" style="top:279.00px;font-size:6.6px;color:#1c1c1c;right:411.00px;transform:scaleX(0.803);transform-origin:right center;">449</div>
<div class="t" style="top:279.00px;font-size:6.6px;color:#1c1c1c;left:620.00px;transform:scaleX(0.876);transform-origin:left center;">JSON <span class="k">ソース</span> <span class="k">ファ</span></div>
<svg class="a" style="left:455px;top:287.6px" width="7" height="8.500" viewBox="0 0 7 8.500"><path d="M.4.400h4.200l2 2v5.700h-6.200z" fill="#fff" stroke="#a9a9a9" stroke-width=".6"/><path d="M1.600 3.500h3.500M1.600 5h3.500M1.600 6.500h3.500" stroke="#d5d5d5" stroke-width=".5"/></svg>
<div class="t" style="top:289.00px;font-size:6.6px;color:#1c1c1c;left:465.00px;transform:scaleX(0.977);transform-origin:left center;">bootstrap.min.css</div>
<div class="t" style="top:289.00px;font-size:6.6px;color:#1c1c1c;right:411.00px;transform:scaleX(0.884);transform-origin:right center;">113,502</div>
<div class="t" style="top:290.00px;font-size:6.6px;color:#1c1c1c;left:620.00px;transform:scaleX(0.867);transform-origin:left center;">CSS <span class="k">ファイル</span></div>
<svg class="a" style="left:455px;top:297.98px" width="7" height="8.500" viewBox="0 0 7 8.500"><rect x=".4" y=".4" width="6.200" height="7.700" rx=".8" fill="#fff" stroke="#3c76c4" stroke-width=".8"/><rect x="1.900" y="2.200" width="3" height="2.600" fill="#3a78c8"/></svg>
<div class="t" style="top:299.00px;font-size:6.6px;color:#1c1c1c;left:465.00px;transform:scaleX(0.999);transform-origin:left center;">company-img01.jpg</div>
<div class="t" style="top:300.00px;font-size:6.6px;color:#1c1c1c;right:411.00px;transform:scaleX(0.877);transform-origin:right center;">28,666</div>
<div class="t" style="top:300.00px;font-size:6.6px;color:#1c1c1c;left:620.00px;transform:scaleX(0.886);transform-origin:left center;">JPG <span class="k">ファイル</span></div>
<svg class="a" style="left:455px;top:308.36px" width="7" height="8.500" viewBox="0 0 7 8.500"><path d="M.4.400h4.200l2 2v5.700h-6.200z" fill="#fff" stroke="#a9a9a9" stroke-width=".6"/><path d="M1.600 3.500h3.500M1.600 5h3.500M1.600 6.500h3.500" stroke="#d5d5d5" stroke-width=".5"/></svg>
<div class="t" style="top:310.00px;font-size:6.6px;color:#1c1c1c;left:465.00px;transform:scaleX(0.969);transform-origin:left center;">bootstrap.css</div>
<div class="t" style="top:310.00px;font-size:6.6px;color:#1c1c1c;right:411.00px;transform:scaleX(0.866);transform-origin:right center;">202,385</div>
<div class="t" style="top:310.00px;font-size:6.6px;color:#1c1c1c;left:620.00px;transform:scaleX(0.867);transform-origin:left center;">CSS <span class="k">ファイル</span></div>
<svg class="a" style="left:455px;top:318.74px" width="7" height="8.500" viewBox="0 0 7 8.500"><rect x=".4" y=".4" width="6.200" height="7.700" rx=".8" fill="#fff" stroke="#3c76c4" stroke-width=".8"/><rect x="1.900" y="2.200" width="3" height="2.600" fill="#3a78c8"/></svg>
<div class="t" style="top:320.00px;font-size:6.6px;color:#1c1c1c;left:465.00px;transform:scaleX(0.990);transform-origin:left center;">contact_back.jpg</div>
<div class="t" style="top:321.00px;font-size:6.6px;color:#1c1c1c;right:411.00px;transform:scaleX(0.866);transform-origin:right center;">145,947</div>
<div class="t" style="top:321.00px;font-size:6.6px;color:#1c1c1c;left:620.00px;transform:scaleX(0.886);transform-origin:left center;">JPG <span class="k">ファイル</span></div>
<svg class="a" style="left:455px;top:329.12px" width="7" height="8.500" viewBox="0 0 7 8.500"><rect x=".4" y=".4" width="6.200" height="7.700" rx=".8" fill="#fff" stroke="#3c76c4" stroke-width=".8"/><rect x="1.900" y="2.200" width="3" height="2.600" fill="#3a78c8"/></svg>
<div class="t" style="top:330.00px;font-size:6.6px;color:#1c1c1c;left:465.00px;transform:scaleX(1.026);transform-origin:left center;">m-e-img1.jpg</div>
<div class="t" style="top:331.00px;font-size:6.6px;color:#1c1c1c;right:411.00px;transform:scaleX(0.877);transform-origin:right center;">52,184</div>
<div class="t" style="top:331.00px;font-size:6.6px;color:#1c1c1c;left:620.00px;transform:scaleX(0.886);transform-origin:left center;">JPG <span class="k">ファイル</span></div>
<svg class="a" style="left:456px;top:340.8px" width="6" height="6" viewBox="0 0 7 7"><circle cx="3.500" cy="3.500" r="3.200" fill="#e9b62c"/><path d="M3.500.3a3.200 3.200 0 0 1 2.800 1.600h-5.600a3.200 3.200 0 0 1 2.800-1.600z" fill="#dc4a3a"/><path d="M.7 1.900l1.600 2.800-1 1.400a3.200 3.200 0 0 1-.6-4.200z" fill="#3f9e4f"/><circle cx="3.500" cy="3.500" r="1.300" fill="#4a86e0" stroke="#fff" stroke-width=".4"/></svg>
<div class="t" style="top:341.00px;font-size:6.6px;color:#1c1c1c;left:465.00px;transform:scaleX(0.989);transform-origin:left center;">choose-reason.html</div>
<div class="t" style="top:341.00px;font-size:6.6px;color:#1c1c1c;right:411.00px;transform:scaleX(0.893);transform-origin:right center;">7,764</div>
<div class="t" style="top:341.00px;font-size:6.6px;color:#1c1c1c;left:620.00px;transform:scaleX(0.925);transform-origin:left center;">Chrome HTML</div>
<div class="a" style="left:660.8px;top:221px;width:8.2px;height:130px;background:#f0f0f0;"></div>
<svg class="a" style="left:662px;top:225px" width="6" height="4" viewBox="0 0 6 4"><path d="M.7 3.200l2.300-2.300 2.300 2.300" fill="none" stroke="#505050" stroke-width="1"/></svg>
<svg class="a" style="left:662px;top:343.5px" width="6" height="4" viewBox="0 0 6 4"><path d="M.7.8l2.300 2.300 2.300-2.300" fill="none" stroke="#505050" stroke-width="1"/></svg>
<div class="a" style="left:661.3px;top:231.7px;width:7.2px;height:15.5px;background:#cdcdcd;"></div>
<div class="a" style="left:453.8px;top:351px;width:215px;height:8px;background:#f0f0f0;"></div>
<svg class="a" style="left:454.5px;top:352px" width="4" height="6" viewBox="0 0 4 6"><path d="M3.200.7l-2.300 2.300 2.300 2.300" fill="none" stroke="#505050" stroke-width="1"/></svg>
<svg class="a" style="left:654px;top:352px" width="4" height="6" viewBox="0 0 4 6"><path d="M.8.7l2.300 2.300-2.300 2.300" fill="none" stroke="#505050" stroke-width="1"/></svg>
<div class="a" style="left:462px;top:351.5px;width:137.7px;height:7px;background:#cdcdcd;"></div>
<div class="t" style="top:225.00px;font-size:6.6px;color:#1c1c1c;left:677.30px;transform:scaleX(0.963);transform-origin:left center;">名前</div>
<svg class="a" style="left:769px;top:220.800px" width="6" height="3" viewBox="0 0 6 3"><path d="M.6 2.600l2.400-2 2.400 2" fill="none" stroke="#999" stroke-width=".6"/></svg>
<div class="t" style="top:225.00px;font-size:6.6px;color:#1c1c1c;right:62.70px;transform:scaleX(1.025);transform-origin:right center;"><span class="k">サイズ</span></div>
<div class="t" style="top:225.00px;font-size:6.6px;color:#1c1c1c;left:968.70px;transform:scaleX(0.933);transform-origin:left center;">種類</div>
<div class="a" style="left:869.6px;top:221px;width:0.7px;height:12px;background:#e0e0e0;"></div>
<div class="a" style="left:964.8px;top:221px;width:0.7px;height:12px;background:#e0e0e0;"></div>
<svg class="a" style="left:677px;top:235.7px" width="7" height="8.500" viewBox="0 0 7 8.500"><path d="M.4.400h4.200l2 2v5.700h-6.200z" fill="#fff" stroke="#9aa9bd" stroke-width=".6"/><rect x="1.700" y="3.200" width="3.200" height="2.600" fill="#dce6f2"/><rect x="2.600" y="3.800" width="1.500" height="1.400" fill="#3f7fd0"/></svg>
<div class="t" style="top:237.00px;font-size:6.6px;color:#1c1c1c;left:686.00px;transform:scaleX(0.981);transform-origin:left center;">default_page.png</div>
<div class="t" style="top:238.00px;font-size:6.6px;color:#1c1c1c;right:62.70px;transform:scaleX(0.893);transform-origin:right center;">8,998</div>
<div class="t" style="top:238.00px;font-size:6.6px;color:#1c1c1c;left:968.70px;transform:scaleX(0.900);transform-origin:left center;">PNG <span class="k">ファイル</span></div>
<svg class="a" style="left:677px;top:246.08px" width="7" height="8.500" viewBox="0 0 7 8.500"><path d="M.4.400h4.200l2 2v5.700h-6.200z" fill="#fff" stroke="#a9a9a9" stroke-width=".6"/><path d="M1.600 3.500h3.500M1.600 5h3.500M1.600 6.500h3.500" stroke="#d5d5d5" stroke-width=".5"/></svg>
<div class="t" style="top:247.00px;font-size:6.6px;color:#1c1c1c;left:686.00px;transform:scaleX(1.014);transform-origin:left center;">index.php</div>
<div class="t" style="top:248.00px;font-size:6.6px;color:#1c1c1c;right:62.70px;transform:scaleX(0.803);transform-origin:right center;">405</div>
<div class="t" style="top:248.00px;font-size:6.6px;color:#1c1c1c;left:968.70px;transform:scaleX(0.916);transform-origin:left center;">PHP <span class="k">ファイル</span></div>
<svg class="a" style="left:677px;top:256.46px" width="7" height="8.500" viewBox="0 0 7 8.500"><path d="M.4.400h4.200l2 2v5.700h-6.200z" fill="#f4f4f4" stroke="#8d8d8d" stroke-width=".7"/><path d="M1.600 3h3.500M1.600 4.300h3.500M1.600 5.600h3.500M1.600 6.900h3.500" stroke="#b5b5b5" stroke-width=".5"/></svg>
<div class="t" style="top:258.00px;font-size:6.6px;color:#1c1c1c;left:686.00px;transform:scaleX(1.006);transform-origin:left center;">license.txt</div>
<div class="t" style="top:258.00px;font-size:6.6px;color:#1c1c1c;right:62.70px;transform:scaleX(0.877);transform-origin:right center;">19,519</div>
<div class="t" style="top:259.00px;font-size:6.6px;color:#1c1c1c;left:968.70px;transform:scaleX(0.895);transform-origin:left center;"><span class="k">テキスト</span> <span class="k">ドキュメン</span></div>
<svg class="a" style="left:677.5px;top:268.14px" width="6" height="6" viewBox="0 0 7 7"><circle cx="3.500" cy="3.500" r="3.200" fill="#e9b62c"/><path d="M3.500.3a3.200 3.200 0 0 1 2.800 1.600h-5.600a3.200 3.200 0 0 1 2.800-1.600z" fill="#dc4a3a"/><path d="M.7 1.900l1.600 2.800-1 1.400a3.200 3.200 0 0 1-.6-4.200z" fill="#3f9e4f"/><circle cx="3.500" cy="3.500" r="1.300" fill="#4a86e0" stroke="#fff" stroke-width=".4"/></svg>
<div class="t" style="top:268.00px;font-size:6.6px;color:#1c1c1c;left:686.00px;transform:scaleX(0.982);transform-origin:left center;">readme.html</div>
<div class="t" style="top:269.00px;font-size:6.6px;color:#1c1c1c;right:62.70px;transform:scaleX(0.893);transform-origin:right center;">7,425</div>
<div class="t" style="top:268.00px;font-size:6.6px;color:#1c1c1c;left:968.70px;transform:scaleX(0.951);transform-origin:left center;">Chrome HTML</div>
<svg class="a" style="left:677px;top:277.22px" width="7" height="8.500" viewBox="0 0 7 8.500"><path d="M.4.400h4.200l2 2v5.700h-6.200z" fill="#fff" stroke="#a9a9a9" stroke-width=".6"/><path d="M1.600 3.500h3.500M1.600 5h3.500M1.600 6.500h3.500" stroke="#d5d5d5" stroke-width=".5"/></svg>
<div class="t" style="top:279.00px;font-size:6.6px;color:#1c1c1c;left:686.00px;transform:scaleX(1.018);transform-origin:left center;">wp-activate.php</div>
<div class="t" style="top:279.00px;font-size:6.6px;color:#1c1c1c;right:62.70px;transform:scaleX(0.893);transform-origin:right center;">7,387</div>
<div class="t" style="top:279.00px;font-size:6.6px;color:#1c1c1c;left:968.70px;transform:scaleX(0.916);transform-origin:left center;">PHP <span class="k">ファイル</span></div>
<svg class="a" style="left:677px;top:287.6px" width="7" height="8.500" viewBox="0 0 7 8.500"><path d="M.4.400h4.200l2 2v5.700h-6.200z" fill="#fff" stroke="#a9a9a9" stroke-width=".6"/><path d="M1.600 3.500h3.500M1.600 5h3.500M1.600 6.500h3.500" stroke="#d5d5d5" stroke-width=".5"/></svg>
<div class="t" style="top:289.00px;font-size:6.6px;color:#1c1c1c;left:686.00px;transform:scaleX(1.003);transform-origin:left center;">wp-blog-header.php</div>
<div class="t" style="top:289.00px;font-size:6.6px;color:#1c1c1c;right:62.70px;transform:scaleX(0.803);transform-origin:right center;">351</div>
<div class="t" style="top:290.00px;font-size:6.6px;color:#1c1c1c;left:968.70px;transform:scaleX(0.916);transform-origin:left center;">PHP <span class="k">ファイル</span></div>
<svg class="a" style="left:677px;top:297.98px" width="7" height="8.500" viewBox="0 0 7 8.500"><path d="M.4.400h4.200l2 2v5.700h-6.200z" fill="#fff" stroke="#a9a9a9" stroke-width=".6"/><path d="M1.600 3.500h3.500M1.600 5h3.500M1.600 6.500h3.500" stroke="#d5d5d5" stroke-width=".5"/></svg>
<div class="t" style="top:299.00px;font-size:6.6px;color:#1c1c1c;left:686.00px;transform:scaleX(1.029);transform-origin:left center;">wp-comments-post.php</div>
<div class="t" style="top:300.00px;font-size:6.6px;color:#1c1c1c;right:62.70px;transform:scaleX(0.893);transform-origin:right center;">2,323</div>
<div class="t" style="top:300.00px;font-size:6.6px;color:#1c1c1c;left:968.70px;transform:scaleX(0.916);transform-origin:left center;">PHP <span class="k">ファイル</span></div>
<svg class="a" style="left:677px;top:308.36px" width="7" height="8.500" viewBox="0 0 7 8.500"><path d="M.4.400h4.200l2 2v5.700h-6.200z" fill="#fff" stroke="#a9a9a9" stroke-width=".6"/><path d="M1.600 3.500h3.500M1.600 5h3.500M1.600 6.500h3.500" stroke="#d5d5d5" stroke-width=".5"/></svg>
<div class="t" style="top:310.00px;font-size:6.6px;color:#1c1c1c;left:686.00px;transform:scaleX(1.031);transform-origin:left center;">wp-config-sample.php</div>
<div class="t" style="top:310.00px;font-size:6.6px;color:#1c1c1c;right:62.70px;transform:scaleX(0.893);transform-origin:right center;">3,234</div>
<div class="t" style="top:310.00px;font-size:6.6px;color:#1c1c1c;left:968.70px;transform:scaleX(0.916);transform-origin:left center;">PHP <span class="k">ファイル</span></div>
<div class="a" style="left:675px;top:317.74px;width:334.5px;height:10.5px;background:#f0f0f0;"></div>
<svg class="a" style="left:677px;top:318.74px" width="7" height="8.500" viewBox="0 0 7 8.500"><path d="M.4.400h4.200l2 2v5.700h-6.200z" fill="#cfe2f7" stroke="#7fa6d6" stroke-width=".6"/><path d="M1.600 3.500h3.500M1.600 5h3.500M1.600 6.500h3.500" stroke="#9dbde4" stroke-width=".5"/></svg>
<div class="t" style="top:320.00px;font-size:6.6px;color:#1c1c1c;left:686.00px;transform:scaleX(1.047);transform-origin:left center;">wp-config.php</div>
<div class="t" style="top:321.00px;font-size:6.6px;color:#1c1c1c;right:62.70px;transform:scaleX(0.893);transform-origin:right center;">3,223</div>
<div class="t" style="top:321.00px;font-size:6.6px;color:#1c1c1c;left:968.70px;transform:scaleX(0.916);transform-origin:left center;">PHP <span class="k">ファイル</span></div>
<svg class="a" style="left:677px;top:329.12px" width="7" height="8.500" viewBox="0 0 7 8.500"><path d="M.4.400h4.200l2 2v5.700h-6.200z" fill="#fff" stroke="#a9a9a9" stroke-width=".6"/><path d="M1.600 3.500h3.500M1.600 5h3.500M1.600 6.500h3.500" stroke="#d5d5d5" stroke-width=".5"/></svg>
<div class="t" style="top:330.00px;font-size:6.6px;color:#1c1c1c;left:686.00px;transform:scaleX(1.047);transform-origin:left center;">wp-cron.php</div>
<div class="t" style="top:331.00px;font-size:6.6px;color:#1c1c1c;right:62.70px;transform:scaleX(0.893);transform-origin:right center;">5,617</div>
<div class="t" style="top:331.00px;font-size:6.6px;color:#1c1c1c;left:968.70px;transform:scaleX(0.916);transform-origin:left center;">PHP <span class="k">ファイル</span></div>
<svg class="a" style="left:677px;top:339.5px" width="7" height="8.500" viewBox="0 0 7 8.500"><path d="M.4.400h4.200l2 2v5.700h-6.200z" fill="#fff" stroke="#a9a9a9" stroke-width=".6"/><path d="M1.600 3.500h3.500M1.600 5h3.500M1.600 6.500h3.500" stroke="#d5d5d5" stroke-width=".5"/></svg>
<div class="t" style="top:341.00px;font-size:6.6px;color:#1c1c1c;left:686.00px;transform:scaleX(1.044);transform-origin:left center;">wp-links-opml.php</div>
<div class="t" style="top:341.00px;font-size:6.6px;color:#1c1c1c;right:62.70px;transform:scaleX(0.893);transform-origin:right center;">2,502</div>
<div class="t" style="top:342.00px;font-size:6.6px;color:#1c1c1c;left:968.70px;transform:scaleX(0.916);transform-origin:left center;">PHP <span class="k">ファイル</span></div>
<div class="a" style="left:1009.5px;top:221px;width:9.5px;height:130px;background:#f0f0f0;"></div>
<svg class="a" style="left:1011.5px;top:225px" width="6" height="4" viewBox="0 0 6 4"><path d="M.7 3.200l2.300-2.300 2.300 2.300" fill="none" stroke="#505050" stroke-width="1"/></svg>
<svg class="a" style="left:1011.5px;top:343.5px" width="6" height="4" viewBox="0 0 6 4"><path d="M.7.8l2.300 2.300 2.300-2.300" fill="none" stroke="#505050" stroke-width="1"/></svg>
<div class="a" style="left:1010.3px;top:257.5px;width:7.5px;height:50.5px;background:#cdcdcd;"></div>
<div class="a" style="left:674.3px;top:351px;width:344.5px;height:8px;background:#f0f0f0;"></div>
<svg class="a" style="left:676.5px;top:352px" width="4" height="6" viewBox="0 0 4 6"><path d="M3.200.7l-2.300 2.300 2.300 2.300" fill="none" stroke="#505050" stroke-width="1"/></svg>
<svg class="a" style="left:1004px;top:352px" width="4" height="6" viewBox="0 0 4 6"><path d="M.8.7l2.300 2.300-2.300 2.300" fill="none" stroke="#505050" stroke-width="1"/></svg>
<div class="a" style="left:683px;top:351.5px;width:195.7px;height:7px;background:#cdcdcd;"></div>
<div class="a" style="left:453px;top:360px;width:216.5px;height:13px;background:#f0f0f0;border-left:.8px solid #9a9a9a;"></div>
<div class="t" style="top:365.00px;font-size:6.6px;color:#1c1c1c;left:453.80px;transform:scaleX(0.938);transform-origin:left center;">35 個<span class="h">の</span><span class="k">ファイル</span><span class="h">と</span> 34 個<span class="h">の</span><span class="k">ディレクトリ</span> 合計<span class="k">サイズ</span>: 22,191,434 <span class="k">バイト</span></div>
<div class="a" style="left:673.5px;top:360px;width:346px;height:13px;background:#f0f0f0;border-left:.8px solid #9a9a9a;"></div>
<div class="t" style="top:365.00px;font-size:6.6px;color:#1c1c1c;left:676.00px;transform:scaleX(0.955);transform-origin:left center;">1 個<span class="h">の</span><span class="k">ファイル</span><span class="h">を</span>選択 合計<span class="k">サイズ</span>: 3,223 <span class="k">バイト</span></div>
<div class="a" style="left:452px;top:374.3px;width:568.5px;height:1px;background:#9a9a9a;"></div>
<div class="a" style="left:453px;top:375.3px;width:566.5px;height:46px;background:#fff;"></div>
<div class="t" style="top:381.00px;font-size:6.6px;color:#1c1c1c;left:456.00px;transform:scaleX(0.978);transform-origin:left center;"><span class="k">サーバー</span>/<span class="k">ローカル</span> <span class="k">ファイル</span></div>
<div class="t" style="top:381.00px;font-size:6.6px;color:#1c1c1c;left:584.00px;transform:scaleX(0.971);transform-origin:left center;">方向</div>
<div class="t" style="top:381.00px;font-size:6.6px;color:#1c1c1c;left:632.80px;transform:scaleX(0.935);transform-origin:left center;"><span class="k">リモート</span> <span class="k">ファイル</span></div>
<div class="a" style="left:550.7px;top:376px;width:0.7px;height:12px;background:#e0e0e0;"></div>
<div class="a" style="left:629.9px;top:376px;width:0.7px;height:12px;background:#e0e0e0;"></div>
<div class="a" style="left:453px;top:412px;width:566.5px;height:9px;background:#f0f0f0;"></div>
<svg class="a" style="left:454.8px;top:413.5px" width="4" height="6" viewBox="0 0 4 6"><path d="M3.200.7l-2.300 2.300 2.300 2.300" fill="none" stroke="#505050" stroke-width="1"/></svg>
<svg class="a" style="left:1013px;top:413.5px" width="4" height="6" viewBox="0 0 4 6"><path d="M.8.7l2.300 2.300-2.300 2.300" fill="none" stroke="#505050" stroke-width="1"/></svg>
<div class="a" style="left:462px;top:412.5px;width:302.5px;height:8px;background:#cdcdcd;"></div>
<div class="a" style="left:452px;top:421.2px;width:568.5px;height:1px;background:#8f8f8f;"></div>
<div class="a" style="left:452px;top:422.2px;width:568.5px;height:14px;background:linear-gradient(#dcdcdc,#eeeeee 70%,#f0f0f0);"></div>
<div class="a" style="left:454.6px;top:422px;width:66px;height:12.5px;background:#fff;border:.8px solid #b8b8b8;border-top:none;"></div>
<div class="t" style="top:425.00px;font-size:6.6px;color:#000;font-weight:bold;left:458.50px;transform:scaleX(0.938);transform-origin:left center;"><span class="k">キュー</span> <span class="k">ファイル</span></div>
<div class="a" style="left:521.5px;top:422px;width:45px;height:11.5px;background:#ececec;border:.8px solid #c8c8c8;border-top:none;"></div>
<div class="t" style="top:425.00px;font-size:6.6px;color:#1c1c1c;left:525.80px;transform:scaleX(0.922);transform-origin:left center;">失敗<span class="h">した</span>転送</div>
<div class="a" style="left:566.5px;top:422px;width:68px;height:11.5px;background:#ececec;border:.8px solid #c8c8c8;border-top:none;"></div>
<div class="t" style="top:425.00px;font-size:6.6px;color:#1c1c1c;left:571.30px;transform:scaleX(0.924);transform-origin:left center;">成功<span class="h">した</span>転送 (17157)</div>
<div class="a" style="left:452px;top:436.3px;width:568.5px;height:0.8px;background:#d9d9d9;"></div>
<svg class="a" style="left:894px;top:437.500px" width="9" height="10" viewBox="0 0 9 10"><path d="M2.300 4.500v-1.500a2.200 2.200 0 0 1 4.400 0v1.500" fill="none" stroke="#8c7a3a" stroke-width="1"/><rect x=".8" y="4.300" width="7.400" height="5.200" fill="#f4c020"/><rect x="4" y="5.800" width="1" height="2.300" fill="#5a4a10"/></svg>
<svg class="a" style="left:904.500px;top:437.800px" width="10" height="10" viewBox="0 0 10 10"><circle cx="5" cy="5" r="3.500" fill="#fff" stroke="#444" stroke-width="1.400" stroke-dasharray="1.600 1.150"/><circle cx="5" cy="5" r="2.900" fill="#eee" stroke="#444" stroke-width=".7"/><path d="M4 3.500l2 1.500-2 1.500z" fill="#2fb344"/></svg>
<svg class="a" style="left:915.500px;top:438px" width="9" height="9" viewBox="0 0 9 9"><circle cx="4.500" cy="4.700" r="3.700" fill="#fff" stroke="#8d8d8d" stroke-width=".9"/><path d="M4.500 2.500v2.400h-1.500" fill="none" stroke="#999" stroke-width=".7"/><path d="M2.500.800h4" stroke="#8d8d8d" stroke-width=".9"/></svg>
<div class="t" style="top:440.00px;font-size:6.6px;color:#1c1c1c;left:928.00px;transform:scaleX(0.917);transform-origin:left center;"><span class="k">キュー</span>: <span class="h">なし</span></div>
<div class="a" style="left:989px;top:438px;width:0.7px;height:10px;background:#dadada;"></div>
<svg class="a" style="left:994px;top:439.500px" width="16" height="7" viewBox="0 0 16 7"><circle cx="3.400" cy="3.200" r="2.700" fill="#2f8f3a"/><circle cx="2.800" cy="2.500" r="1" fill="#6cc070"/><circle cx="11.900" cy="3.200" r="2.700" fill="#8a2f22"/><circle cx="11.300" cy="2.500" r="1" fill="#c07060"/></svg>
<svg class="a" style="left:1013px;top:442px" width="7" height="7" viewBox="0 0 7 7"><path d="M6 1l-5 5M6 3.500l-2.500 2.500" stroke="#c4c4c4" stroke-width=".8"/></svg>
<svg class="a" style="left:0;top:0" width="1024" height="456" viewBox="0 0 1024 456">
<rect x="156.400" y="207.500" width="283.200" height="19.100" fill="none" stroke="#ec1c24" stroke-width="2.800"/>
<path d="M441.0 218.7C442.8 217.9 448.8 215.1 452.0 213.9C455.2 212.7 457.0 212.0 460.0 211.3C463.0 210.7 466.7 210.4 470.0 210.0C473.3 209.6 476.7 209.4 480.0 209.1C483.3 208.8 486.7 208.3 490.0 208.1C493.3 207.9 495.8 207.8 500.0 207.7C504.2 207.6 509.2 207.6 515.0 207.6C520.8 207.6 529.9 207.6 535.0 207.9C540.1 208.2 541.9 208.6 545.6 209.2C549.3 209.8 553.3 210.6 557.0 211.4C560.7 212.2 564.8 213.0 568.0 213.8C571.2 214.6 573.0 215.2 576.0 216.1C579.0 217.0 582.5 217.9 586.0 219.0C589.5 220.1 592.8 220.9 597.0 222.4C601.2 223.9 607.8 226.4 611.4 227.8C615.0 229.2 615.6 229.9 618.5 231.0C621.4 232.1 625.4 233.2 629.0 234.6C632.6 236.0 637.0 237.9 640.0 239.3C643.0 240.7 644.7 241.6 647.0 243.0C649.3 244.4 651.6 246.1 654.0 247.8C656.4 249.5 658.8 251.4 661.2 253.2C663.6 255.0 665.9 256.5 668.3 258.4C670.7 260.3 673.0 262.5 675.5 264.6C678.0 266.8 680.6 269.2 683.0 271.3C685.4 273.4 687.2 274.6 690.0 277.0C692.8 279.4 696.8 283.1 699.5 285.5C702.2 287.9 703.9 289.5 706.0 291.5C708.1 293.5 711.0 296.6 712.0 297.6" fill="none" stroke="#ec1c24" stroke-width="1.700" stroke-linecap="round" stroke-linejoin="round"/>
<path d="M708.400 258.500C709 268 709.800 278 710.700 285C711.300 290 712 295 712.600 298.700L683 300" fill="none" stroke="#ec1c24" stroke-width="1.700" stroke-linecap="round" stroke-linejoin="round"/>
</svg>
<div class="t" style="top:282.00px;font-size:8.8px;color:#ea3a30;left:226.00px;transform:scaleX(0.989);transform-origin:left center;">書き換えたコンフィグのphpを入れ直します。</div>
</body>
</html>
